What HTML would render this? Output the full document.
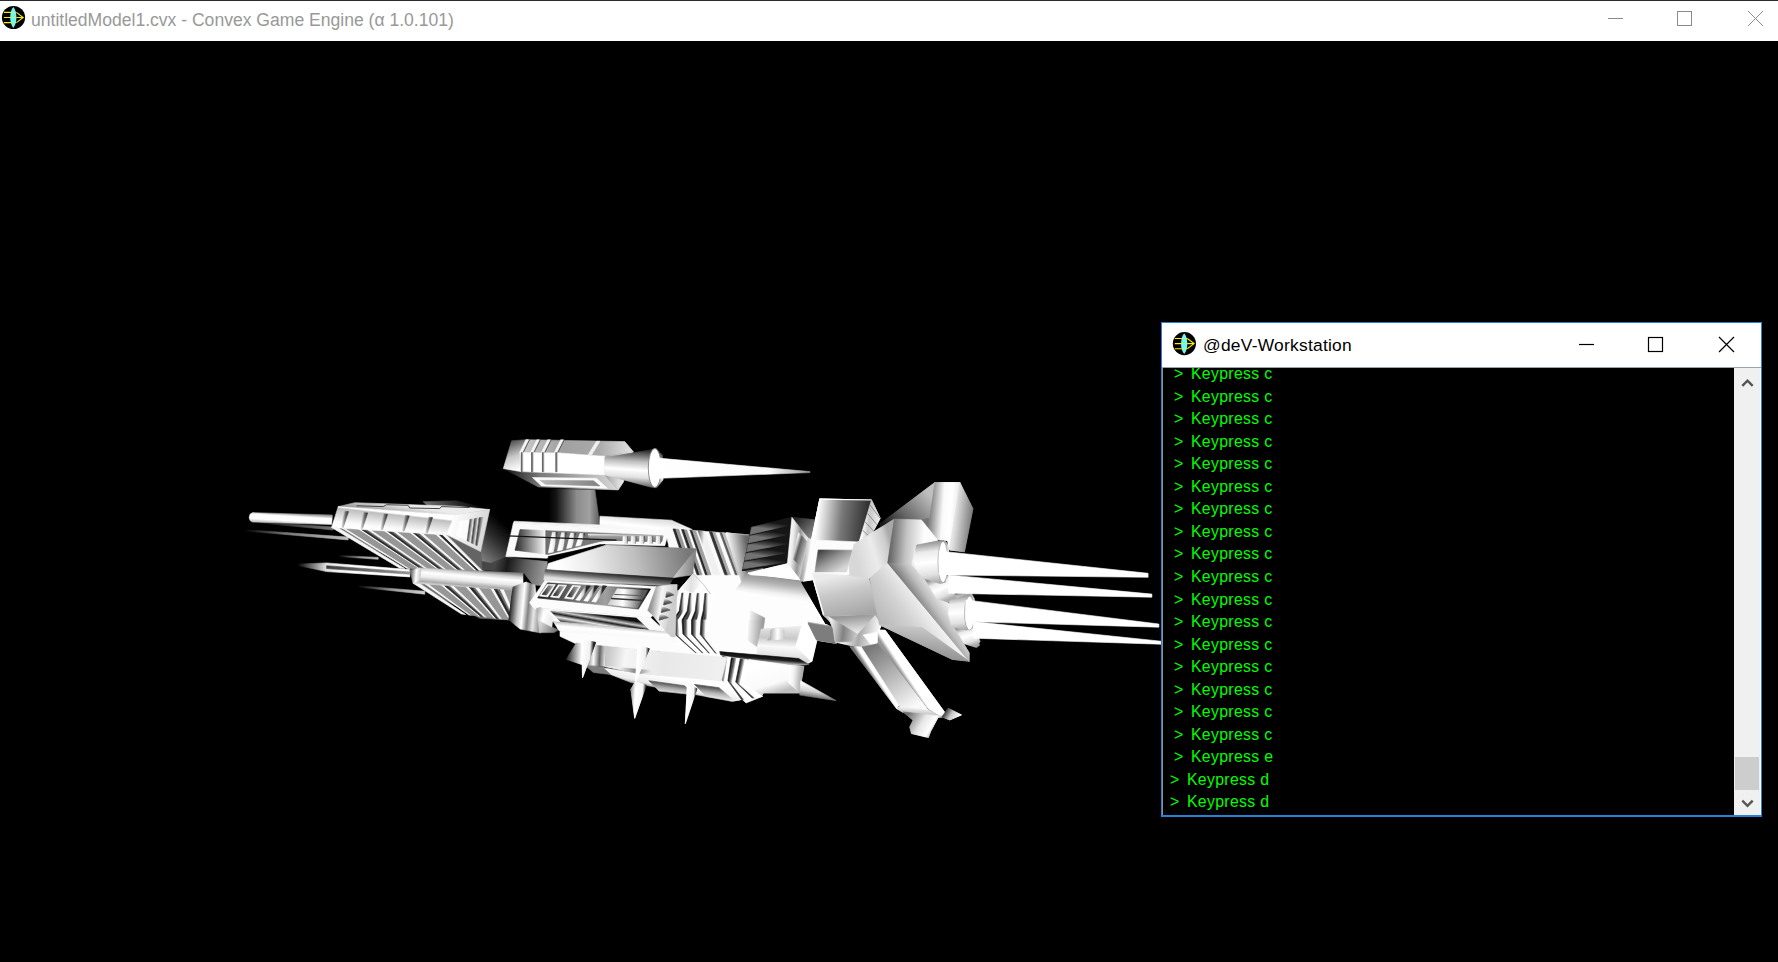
<!DOCTYPE html>
<html><head><meta charset="utf-8"><title>untitledModel1.cvx - Convex Game Engine</title>
<style>
html,body{margin:0;padding:0;background:#000;overflow:hidden}
body{width:1778px;height:962px;position:relative;font-family:"Liberation Sans",sans-serif}
#tb{position:absolute;left:0;top:0;width:1778px;height:41px;background:#fff;border-top:1px solid #2b2b2b;box-sizing:border-box}
#tb .t{position:absolute;left:31px;top:7.7px;font-size:17.6px;line-height:22px;color:#999;white-space:nowrap;letter-spacing:-0.02px}
svg{position:absolute;left:0;top:0}
#cw{position:absolute;left:1161px;top:322px;width:601px;height:495px;box-sizing:border-box;border:1px solid #2a7fd6;border-right-width:1px;border-bottom-width:2px;background:#000}
#ct{position:absolute;left:0;top:0;width:100%;height:45px;background:#fff;border-bottom:1px solid #9aa3ad;box-sizing:border-box}
#ct .t{position:absolute;left:41px;top:11px;font-size:17.4px;line-height:22px;color:#000;white-space:nowrap;letter-spacing:0.25px}
#cb{position:absolute;left:0;top:45px;right:27px;bottom:0;overflow:hidden;color:#00ff00;font-size:15.8px;white-space:pre;border-left:1px solid #8a9099}
#cb div{position:absolute;left:12px;height:22px;line-height:22px}
#sb{position:absolute;right:0;top:45px;width:26px;bottom:0;background:#f0f0f0;border-right:1px solid #fff}
#th{position:absolute;left:1px;width:24px;top:389px;height:33px;background:#cdcdcd}
</style></head><body>
<div id="tb"><span class="t">untitledModel1.cvx - Convex Game Engine (α 1.0.101)</span></div>
<svg width="1778" height="962" viewBox="0 0 1778 962"><defs><linearGradient id="g1" gradientUnits="userSpaceOnUse" x1="244.2" y1="530.0" x2="348.2" y2="538.3"><stop offset="0" stop-color="#000000"/><stop offset="0.4" stop-color="#787878"/><stop offset="1" stop-color="#bebebe"/></linearGradient><linearGradient id="g2" gradientUnits="userSpaceOnUse" x1="338.2" y1="555.8" x2="378.2" y2="558.3"><stop offset="0" stop-color="#000000"/><stop offset="0.5" stop-color="#8c8c8c"/><stop offset="1" stop-color="#c8c8c8"/></linearGradient><linearGradient id="g3" gradientUnits="userSpaceOnUse" x1="297.4" y1="564.1" x2="356.5" y2="568.2"><stop offset="0" stop-color="#000000"/><stop offset="0.5" stop-color="#e6e6e6"/><stop offset="1" stop-color="#ffffff"/></linearGradient><linearGradient id="g4" gradientUnits="userSpaceOnUse" x1="326.6" y1="565.7" x2="409.8" y2="573.2"><stop offset="0" stop-color="#3c3c3c"/><stop offset="1" stop-color="#969696"/></linearGradient><linearGradient id="g5" gradientUnits="userSpaceOnUse" x1="357.4" y1="586.2" x2="424.8" y2="592.4"><stop offset="0" stop-color="#000000"/><stop offset="0.5" stop-color="#969696"/><stop offset="1" stop-color="#d2d2d2"/></linearGradient><linearGradient id="g6" gradientUnits="userSpaceOnUse" x1="260.0" y1="522.5" x2="333.2" y2="528.3"><stop offset="0" stop-color="#141414"/><stop offset="1" stop-color="#787878"/></linearGradient><linearGradient id="g7" gradientUnits="userSpaceOnUse" x1="289.9" y1="513.3" x2="289.3" y2="523.3"><stop offset="0" stop-color="#969696"/><stop offset="0.3" stop-color="#ffffff"/><stop offset="0.75" stop-color="#ffffff"/><stop offset="1" stop-color="#c8c8c8"/></linearGradient><linearGradient id="g8" gradientUnits="userSpaceOnUse" x1="508.0" y1="527.0" x2="478.0" y2="560.0"><stop offset="0" stop-color="#000000"/><stop offset="0.4" stop-color="#2d2d2d"/><stop offset="1" stop-color="#878787"/></linearGradient><linearGradient id="g9" gradientUnits="userSpaceOnUse" x1="494.9" y1="564.9" x2="543.2" y2="574.9"><stop offset="0" stop-color="#464646"/><stop offset="0.25" stop-color="#191919"/><stop offset="0.6" stop-color="#5a5a5a"/><stop offset="1" stop-color="#969696"/></linearGradient><linearGradient id="g10" gradientUnits="userSpaceOnUse" x1="389.8" y1="503.3" x2="388.2" y2="513.3"><stop offset="0" stop-color="#ebebeb"/><stop offset="1" stop-color="#969696"/></linearGradient><linearGradient id="g11" gradientUnits="userSpaceOnUse" x1="389.8" y1="510.0" x2="387.3" y2="531.6"><stop offset="0" stop-color="#ffffff"/><stop offset="0.12" stop-color="#ffffff"/><stop offset="0.2" stop-color="#bebebe"/><stop offset="0.8" stop-color="#fafafa"/><stop offset="1" stop-color="#ffffff"/></linearGradient><linearGradient id="g12" gradientUnits="userSpaceOnUse" x1="341.6" y1="518.3" x2="347.4" y2="518.6"><stop offset="0" stop-color="#ffffff"/><stop offset="0.6" stop-color="#787878"/><stop offset="1" stop-color="#3c3c3c"/></linearGradient><linearGradient id="g13" gradientUnits="userSpaceOnUse" x1="360.7" y1="518.3" x2="366.5" y2="518.6"><stop offset="0" stop-color="#ffffff"/><stop offset="0.6" stop-color="#787878"/><stop offset="1" stop-color="#3c3c3c"/></linearGradient><linearGradient id="g14" gradientUnits="userSpaceOnUse" x1="380.7" y1="518.3" x2="386.5" y2="518.6"><stop offset="0" stop-color="#ffffff"/><stop offset="0.6" stop-color="#787878"/><stop offset="1" stop-color="#3c3c3c"/></linearGradient><linearGradient id="g15" gradientUnits="userSpaceOnUse" x1="402.3" y1="518.3" x2="408.1" y2="518.6"><stop offset="0" stop-color="#ffffff"/><stop offset="0.6" stop-color="#787878"/><stop offset="1" stop-color="#3c3c3c"/></linearGradient><linearGradient id="g16" gradientUnits="userSpaceOnUse" x1="425.6" y1="518.3" x2="431.5" y2="518.6"><stop offset="0" stop-color="#ffffff"/><stop offset="0.6" stop-color="#787878"/><stop offset="1" stop-color="#3c3c3c"/></linearGradient><linearGradient id="g17" gradientUnits="userSpaceOnUse" x1="451.4" y1="523.3" x2="486.4" y2="530.0"><stop offset="0" stop-color="#ffffff"/><stop offset="1" stop-color="#d7d7d7"/></linearGradient><linearGradient id="g18" gradientUnits="userSpaceOnUse" x1="456.4" y1="528.3" x2="481.4" y2="531.6"><stop offset="0" stop-color="#ffffff"/><stop offset="0.45" stop-color="#fafafa"/><stop offset="0.5" stop-color="#505050"/><stop offset="0.62" stop-color="#e6e6e6"/><stop offset="0.68" stop-color="#464646"/><stop offset="0.8" stop-color="#dcdcdc"/><stop offset="0.86" stop-color="#464646"/><stop offset="1" stop-color="#c8c8c8"/></linearGradient><linearGradient id="g19" gradientUnits="userSpaceOnUse" x1="511.4" y1="603.2" x2="524.7" y2="603.2"><stop offset="0" stop-color="#000000"/><stop offset="0.5" stop-color="#3c3c3c"/><stop offset="1" stop-color="#aaaaaa"/></linearGradient><linearGradient id="g20" gradientUnits="userSpaceOnUse" x1="469.7" y1="569.9" x2="468.1" y2="588.2"><stop offset="0" stop-color="#8c8c8c"/><stop offset="0.15" stop-color="#d2d2d2"/><stop offset="0.35" stop-color="#ffffff"/><stop offset="0.6" stop-color="#ebebeb"/><stop offset="0.85" stop-color="#aaaaaa"/><stop offset="1" stop-color="#e6e6e6"/></linearGradient><linearGradient id="g21" gradientUnits="userSpaceOnUse" x1="411.5" y1="574.9" x2="420.6" y2="575.7"><stop offset="0" stop-color="#787878"/><stop offset="0.5" stop-color="#ffffff"/><stop offset="1" stop-color="#c8c8c8"/></linearGradient><linearGradient id="g22" gradientUnits="userSpaceOnUse" x1="548.3" y1="506.6" x2="599.9" y2="506.6"><stop offset="0" stop-color="#000000"/><stop offset="0.15" stop-color="#141414"/><stop offset="0.55" stop-color="#8c8c8c"/><stop offset="0.8" stop-color="#a0a0a0"/><stop offset="1" stop-color="#5a5a5a"/></linearGradient><linearGradient id="g23" gradientUnits="userSpaceOnUse" x1="623.2" y1="516.6" x2="621.5" y2="531.5"><stop offset="0" stop-color="#e1e1e1"/><stop offset="0.5" stop-color="#ffffff"/><stop offset="1" stop-color="#f0f0f0"/></linearGradient><linearGradient id="g24" gradientUnits="userSpaceOnUse" x1="698.0" y1="530.8" x2="704.5" y2="531.3"><stop offset="0" stop-color="#5a5a5a"/><stop offset="1" stop-color="#f0f0f0"/></linearGradient><linearGradient id="g25" gradientUnits="userSpaceOnUse" x1="727.1" y1="533.1" x2="749.7" y2="534.9"><stop offset="0" stop-color="#fcfcfc"/><stop offset="0.3" stop-color="#d7d7d7"/><stop offset="1" stop-color="#6e6e6e"/></linearGradient><linearGradient id="g26" gradientUnits="userSpaceOnUse" x1="515.0" y1="541.5" x2="663.1" y2="541.5"><stop offset="0" stop-color="#282828"/><stop offset="0.2" stop-color="#f5f5f5"/><stop offset="0.21" stop-color="#6e6e6e"/><stop offset="0.5" stop-color="#787878"/><stop offset="1" stop-color="#969696"/></linearGradient><linearGradient id="g27" gradientUnits="userSpaceOnUse" x1="550.8" y1="541.5" x2="556.6" y2="541.5"><stop offset="0" stop-color="#ffffff"/><stop offset="0.7" stop-color="#e6e6e6"/><stop offset="1" stop-color="#3c3c3c"/></linearGradient><linearGradient id="g28" gradientUnits="userSpaceOnUse" x1="559.9" y1="541.5" x2="565.7" y2="541.5"><stop offset="0" stop-color="#ffffff"/><stop offset="0.7" stop-color="#e6e6e6"/><stop offset="1" stop-color="#3c3c3c"/></linearGradient><linearGradient id="g29" gradientUnits="userSpaceOnUse" x1="569.1" y1="541.5" x2="574.9" y2="541.5"><stop offset="0" stop-color="#ffffff"/><stop offset="0.7" stop-color="#e6e6e6"/><stop offset="1" stop-color="#3c3c3c"/></linearGradient><linearGradient id="g30" gradientUnits="userSpaceOnUse" x1="578.2" y1="541.5" x2="584.1" y2="541.5"><stop offset="0" stop-color="#ffffff"/><stop offset="0.7" stop-color="#e6e6e6"/><stop offset="1" stop-color="#3c3c3c"/></linearGradient><linearGradient id="g31" gradientUnits="userSpaceOnUse" x1="623.2" y1="534.0" x2="623.2" y2="541.5"><stop offset="0" stop-color="#fafafa"/><stop offset="0.3" stop-color="#a0a0a0"/><stop offset="1" stop-color="#6e6e6e"/></linearGradient><linearGradient id="g32" gradientUnits="userSpaceOnUse" x1="623.2" y1="539.9" x2="627.8" y2="539.9"><stop offset="0" stop-color="#ffffff"/><stop offset="0.7" stop-color="#d2d2d2"/><stop offset="1" stop-color="#464646"/></linearGradient><linearGradient id="g33" gradientUnits="userSpaceOnUse" x1="631.5" y1="539.9" x2="636.2" y2="539.9"><stop offset="0" stop-color="#ffffff"/><stop offset="0.7" stop-color="#d2d2d2"/><stop offset="1" stop-color="#464646"/></linearGradient><linearGradient id="g34" gradientUnits="userSpaceOnUse" x1="639.8" y1="539.9" x2="644.5" y2="539.9"><stop offset="0" stop-color="#ffffff"/><stop offset="0.7" stop-color="#d2d2d2"/><stop offset="1" stop-color="#464646"/></linearGradient><linearGradient id="g35" gradientUnits="userSpaceOnUse" x1="648.2" y1="539.9" x2="652.8" y2="539.9"><stop offset="0" stop-color="#ffffff"/><stop offset="0.7" stop-color="#d2d2d2"/><stop offset="1" stop-color="#464646"/></linearGradient><linearGradient id="g36" gradientUnits="userSpaceOnUse" x1="656.5" y1="539.9" x2="661.1" y2="539.9"><stop offset="0" stop-color="#ffffff"/><stop offset="0.7" stop-color="#d2d2d2"/><stop offset="1" stop-color="#464646"/></linearGradient><linearGradient id="g37" gradientUnits="userSpaceOnUse" x1="559.9" y1="574.8" x2="686.4" y2="548.2"><stop offset="0" stop-color="#ffffff"/><stop offset="0.25" stop-color="#ebebeb"/><stop offset="0.6" stop-color="#bebebe"/><stop offset="1" stop-color="#787878"/></linearGradient><linearGradient id="g38" gradientUnits="userSpaceOnUse" x1="676.5" y1="566.5" x2="696.4" y2="568.2"><stop offset="0" stop-color="#c8c8c8"/><stop offset="1" stop-color="#787878"/></linearGradient><linearGradient id="g39" gradientUnits="userSpaceOnUse" x1="506.6" y1="478.3" x2="616.5" y2="481.6"><stop offset="0" stop-color="#191919"/><stop offset="0.3" stop-color="#787878"/><stop offset="1" stop-color="#d7d7d7"/></linearGradient><linearGradient id="g40" gradientUnits="userSpaceOnUse" x1="539.9" y1="482.4" x2="599.9" y2="483.3"><stop offset="0" stop-color="#b9b9b9"/><stop offset="1" stop-color="#828282"/></linearGradient><linearGradient id="g41" gradientUnits="userSpaceOnUse" x1="604.9" y1="466.6" x2="628.2" y2="468.3"><stop offset="0" stop-color="#a0a0a0"/><stop offset="1" stop-color="#fafafa"/></linearGradient><linearGradient id="g42" gradientUnits="userSpaceOnUse" x1="508.3" y1="443.3" x2="518.3" y2="469.9"><stop offset="0" stop-color="#5a5a5a"/><stop offset="0.5" stop-color="#c8c8c8"/><stop offset="1" stop-color="#ffffff"/></linearGradient><linearGradient id="g43" gradientUnits="userSpaceOnUse" x1="523.3" y1="446.6" x2="631.5" y2="448.3"><stop offset="0" stop-color="#c8c8c8"/><stop offset="0.35" stop-color="#a0a0a0"/><stop offset="0.7" stop-color="#aaaaaa"/><stop offset="1" stop-color="#e1e1e1"/></linearGradient><linearGradient id="g44" gradientUnits="userSpaceOnUse" x1="521.3" y1="458.3" x2="522.8" y2="458.3"><stop offset="0" stop-color="#3c3c3c"/><stop offset="1" stop-color="#aaaaaa"/></linearGradient><linearGradient id="g45" gradientUnits="userSpaceOnUse" x1="531.6" y1="458.3" x2="533.1" y2="458.3"><stop offset="0" stop-color="#3c3c3c"/><stop offset="1" stop-color="#aaaaaa"/></linearGradient><linearGradient id="g46" gradientUnits="userSpaceOnUse" x1="542.4" y1="458.3" x2="543.9" y2="458.3"><stop offset="0" stop-color="#3c3c3c"/><stop offset="1" stop-color="#aaaaaa"/></linearGradient><linearGradient id="g47" gradientUnits="userSpaceOnUse" x1="555.8" y1="458.3" x2="557.3" y2="458.3"><stop offset="0" stop-color="#3c3c3c"/><stop offset="1" stop-color="#aaaaaa"/></linearGradient><linearGradient id="g48" gradientUnits="userSpaceOnUse" x1="631.5" y1="450.0" x2="629.0" y2="487.4"><stop offset="0" stop-color="#323232"/><stop offset="0.3" stop-color="#bebebe"/><stop offset="0.52" stop-color="#ffffff"/><stop offset="0.72" stop-color="#e1e1e1"/><stop offset="1" stop-color="#505050"/></linearGradient><linearGradient id="g49" gradientUnits="userSpaceOnUse" x1="652.3" y1="466.6" x2="810.0" y2="472.1"><stop offset="0" stop-color="#ffffff"/><stop offset="0.75" stop-color="#fafafa"/><stop offset="1" stop-color="#969696"/></linearGradient><linearGradient id="g50" gradientUnits="userSpaceOnUse" x1="729.9" y1="555.2" x2="748.1" y2="552.1"><stop offset="0" stop-color="#fafafa"/><stop offset="0.4" stop-color="#bebebe"/><stop offset="1" stop-color="#646464"/></linearGradient><linearGradient id="g51" gradientUnits="userSpaceOnUse" x1="774.7" y1="576.9" x2="772.0" y2="597.9"><stop offset="0" stop-color="#969696"/><stop offset="0.3" stop-color="#afafaf"/><stop offset="0.75" stop-color="#f0f0f0"/><stop offset="1" stop-color="#ffffff"/></linearGradient><linearGradient id="g52" gradientUnits="userSpaceOnUse" x1="679.2" y1="610.9" x2="681.0" y2="610.9"><stop offset="0" stop-color="#141414"/><stop offset="1" stop-color="#3c3c3c"/></linearGradient><linearGradient id="g53" gradientUnits="userSpaceOnUse" x1="681.0" y1="610.9" x2="684.0" y2="610.9"><stop offset="0" stop-color="#464646"/><stop offset="1" stop-color="#fafafa"/></linearGradient><linearGradient id="g54" gradientUnits="userSpaceOnUse" x1="684.0" y1="610.9" x2="687.2" y2="610.9"><stop offset="0" stop-color="#ffffff"/><stop offset="1" stop-color="#ffffff"/></linearGradient><linearGradient id="g55" gradientUnits="userSpaceOnUse" x1="687.2" y1="610.9" x2="689.0" y2="610.9"><stop offset="0" stop-color="#141414"/><stop offset="1" stop-color="#3c3c3c"/></linearGradient><linearGradient id="g56" gradientUnits="userSpaceOnUse" x1="689.0" y1="610.9" x2="692.0" y2="610.9"><stop offset="0" stop-color="#464646"/><stop offset="1" stop-color="#fafafa"/></linearGradient><linearGradient id="g57" gradientUnits="userSpaceOnUse" x1="692.0" y1="610.9" x2="695.2" y2="610.9"><stop offset="0" stop-color="#ffffff"/><stop offset="1" stop-color="#ffffff"/></linearGradient><linearGradient id="g58" gradientUnits="userSpaceOnUse" x1="695.2" y1="610.9" x2="696.9" y2="610.9"><stop offset="0" stop-color="#141414"/><stop offset="1" stop-color="#3c3c3c"/></linearGradient><linearGradient id="g59" gradientUnits="userSpaceOnUse" x1="696.9" y1="610.9" x2="700.0" y2="610.9"><stop offset="0" stop-color="#464646"/><stop offset="1" stop-color="#fafafa"/></linearGradient><linearGradient id="g60" gradientUnits="userSpaceOnUse" x1="700.0" y1="610.9" x2="703.2" y2="610.9"><stop offset="0" stop-color="#ffffff"/><stop offset="1" stop-color="#ffffff"/></linearGradient><linearGradient id="g61" gradientUnits="userSpaceOnUse" x1="703.2" y1="610.9" x2="704.9" y2="610.9"><stop offset="0" stop-color="#141414"/><stop offset="1" stop-color="#3c3c3c"/></linearGradient><linearGradient id="g62" gradientUnits="userSpaceOnUse" x1="704.9" y1="610.9" x2="707.9" y2="610.9"><stop offset="0" stop-color="#464646"/><stop offset="1" stop-color="#fafafa"/></linearGradient><linearGradient id="g63" gradientUnits="userSpaceOnUse" x1="707.9" y1="610.9" x2="711.1" y2="610.9"><stop offset="0" stop-color="#ffffff"/><stop offset="1" stop-color="#ffffff"/></linearGradient><linearGradient id="g64" gradientUnits="userSpaceOnUse" x1="674.2" y1="633.7" x2="676.1" y2="633.8"><stop offset="0" stop-color="#141414"/><stop offset="1" stop-color="#3c3c3c"/></linearGradient><linearGradient id="g65" gradientUnits="userSpaceOnUse" x1="676.1" y1="633.8" x2="679.4" y2="633.9"><stop offset="0" stop-color="#464646"/><stop offset="1" stop-color="#fafafa"/></linearGradient><linearGradient id="g66" gradientUnits="userSpaceOnUse" x1="679.4" y1="633.9" x2="682.9" y2="634.0"><stop offset="0" stop-color="#ffffff"/><stop offset="1" stop-color="#ffffff"/></linearGradient><linearGradient id="g67" gradientUnits="userSpaceOnUse" x1="682.9" y1="634.0" x2="684.8" y2="634.0"><stop offset="0" stop-color="#141414"/><stop offset="1" stop-color="#3c3c3c"/></linearGradient><linearGradient id="g68" gradientUnits="userSpaceOnUse" x1="684.8" y1="634.0" x2="688.1" y2="634.1"><stop offset="0" stop-color="#464646"/><stop offset="1" stop-color="#fafafa"/></linearGradient><linearGradient id="g69" gradientUnits="userSpaceOnUse" x1="688.1" y1="634.1" x2="691.5" y2="634.2"><stop offset="0" stop-color="#ffffff"/><stop offset="1" stop-color="#ffffff"/></linearGradient><linearGradient id="g70" gradientUnits="userSpaceOnUse" x1="691.5" y1="634.2" x2="693.4" y2="634.2"><stop offset="0" stop-color="#141414"/><stop offset="1" stop-color="#3c3c3c"/></linearGradient><linearGradient id="g71" gradientUnits="userSpaceOnUse" x1="693.4" y1="634.2" x2="696.7" y2="634.3"><stop offset="0" stop-color="#464646"/><stop offset="1" stop-color="#fafafa"/></linearGradient><linearGradient id="g72" gradientUnits="userSpaceOnUse" x1="696.7" y1="634.3" x2="700.2" y2="634.4"><stop offset="0" stop-color="#ffffff"/><stop offset="1" stop-color="#ffffff"/></linearGradient><linearGradient id="g73" gradientUnits="userSpaceOnUse" x1="700.2" y1="634.4" x2="702.1" y2="634.4"><stop offset="0" stop-color="#141414"/><stop offset="1" stop-color="#3c3c3c"/></linearGradient><linearGradient id="g74" gradientUnits="userSpaceOnUse" x1="702.1" y1="634.4" x2="705.4" y2="634.5"><stop offset="0" stop-color="#464646"/><stop offset="1" stop-color="#fafafa"/></linearGradient><linearGradient id="g75" gradientUnits="userSpaceOnUse" x1="705.4" y1="634.5" x2="708.8" y2="634.6"><stop offset="0" stop-color="#ffffff"/><stop offset="1" stop-color="#ffffff"/></linearGradient><linearGradient id="g76" gradientUnits="userSpaceOnUse" x1="680.2" y1="580.5" x2="702.5" y2="582.5"><stop offset="0" stop-color="#ffffff"/><stop offset="0.5" stop-color="#e1e1e1"/><stop offset="1" stop-color="#ffffff"/></linearGradient><linearGradient id="g77" gradientUnits="userSpaceOnUse" x1="748.1" y1="626.1" x2="764.3" y2="627.1"><stop offset="0" stop-color="#ffffff"/><stop offset="0.15" stop-color="#ebebeb"/><stop offset="1" stop-color="#969696"/></linearGradient><linearGradient id="g78" gradientUnits="userSpaceOnUse" x1="747.1" y1="630.1" x2="763.3" y2="631.1"><stop offset="0" stop-color="#ffffff"/><stop offset="0.15" stop-color="#ebebeb"/><stop offset="1" stop-color="#969696"/></linearGradient><linearGradient id="g79" gradientUnits="userSpaceOnUse" x1="781.5" y1="626.1" x2="779.5" y2="660.5"><stop offset="0" stop-color="#ebebeb"/><stop offset="0.35" stop-color="#c8c8c8"/><stop offset="0.6" stop-color="#fafafa"/><stop offset="1" stop-color="#d7d7d7"/></linearGradient><linearGradient id="g80" gradientUnits="userSpaceOnUse" x1="770.3" y1="634.2" x2="784.5" y2="634.7"><stop offset="0" stop-color="#b4b4b4"/><stop offset="0.5" stop-color="#ffffff"/><stop offset="1" stop-color="#c8c8c8"/></linearGradient><linearGradient id="g81" gradientUnits="userSpaceOnUse" x1="808.8" y1="624.0" x2="836.2" y2="640.2"><stop offset="0" stop-color="#aaaaaa"/><stop offset="1" stop-color="#6e6e6e"/></linearGradient><linearGradient id="g82" gradientUnits="userSpaceOnUse" x1="759.2" y1="652.2" x2="758.2" y2="664.5"><stop offset="0" stop-color="#c8c8c8"/><stop offset="0.2" stop-color="#0a0a0a"/><stop offset="0.5" stop-color="#1e1e1e"/><stop offset="0.75" stop-color="#aaaaaa"/><stop offset="1" stop-color="#ebebeb"/></linearGradient><linearGradient id="g83" gradientUnits="userSpaceOnUse" x1="761.2" y1="662.5" x2="771.4" y2="694.9"><stop offset="0" stop-color="#ffffff"/><stop offset="0.7" stop-color="#fafafa"/><stop offset="1" stop-color="#bebebe"/></linearGradient><linearGradient id="g84" gradientUnits="userSpaceOnUse" x1="789.6" y1="675.7" x2="803.8" y2="676.7"><stop offset="0" stop-color="#ffffff"/><stop offset="0.3" stop-color="#f0f0f0"/><stop offset="1" stop-color="#969696"/></linearGradient><linearGradient id="g85" gradientUnits="userSpaceOnUse" x1="801.7" y1="682.8" x2="799.7" y2="696.9"><stop offset="0" stop-color="#ffffff"/><stop offset="0.5" stop-color="#d2d2d2"/><stop offset="1" stop-color="#5a5a5a"/></linearGradient><linearGradient id="g86" gradientUnits="userSpaceOnUse" x1="720.1" y1="679.3" x2="721.8" y2="679.6"><stop offset="0" stop-color="#141414"/><stop offset="1" stop-color="#3c3c3c"/></linearGradient><linearGradient id="g87" gradientUnits="userSpaceOnUse" x1="721.8" y1="679.6" x2="724.8" y2="680.1"><stop offset="0" stop-color="#464646"/><stop offset="1" stop-color="#fafafa"/></linearGradient><linearGradient id="g88" gradientUnits="userSpaceOnUse" x1="724.8" y1="680.1" x2="727.9" y2="680.7"><stop offset="0" stop-color="#ffffff"/><stop offset="1" stop-color="#ffffff"/></linearGradient><linearGradient id="g89" gradientUnits="userSpaceOnUse" x1="727.9" y1="680.7" x2="729.6" y2="681.0"><stop offset="0" stop-color="#141414"/><stop offset="1" stop-color="#3c3c3c"/></linearGradient><linearGradient id="g90" gradientUnits="userSpaceOnUse" x1="729.6" y1="681.0" x2="732.6" y2="681.6"><stop offset="0" stop-color="#464646"/><stop offset="1" stop-color="#fafafa"/></linearGradient><linearGradient id="g91" gradientUnits="userSpaceOnUse" x1="732.6" y1="681.6" x2="735.7" y2="682.1"><stop offset="0" stop-color="#ffffff"/><stop offset="1" stop-color="#ffffff"/></linearGradient><linearGradient id="g92" gradientUnits="userSpaceOnUse" x1="735.7" y1="682.1" x2="737.4" y2="682.4"><stop offset="0" stop-color="#141414"/><stop offset="1" stop-color="#3c3c3c"/></linearGradient><linearGradient id="g93" gradientUnits="userSpaceOnUse" x1="737.4" y1="682.4" x2="740.3" y2="683.0"><stop offset="0" stop-color="#464646"/><stop offset="1" stop-color="#fafafa"/></linearGradient><linearGradient id="g94" gradientUnits="userSpaceOnUse" x1="740.3" y1="683.0" x2="743.4" y2="683.5"><stop offset="0" stop-color="#ffffff"/><stop offset="1" stop-color="#ffffff"/></linearGradient><linearGradient id="g95" gradientUnits="userSpaceOnUse" x1="509.0" y1="600.0" x2="541.0" y2="603.0"><stop offset="0" stop-color="#000000"/><stop offset="0.3" stop-color="#c8c8c8"/><stop offset="0.45" stop-color="#ffffff"/><stop offset="0.62" stop-color="#828282"/><stop offset="0.8" stop-color="#e6e6e6"/><stop offset="1" stop-color="#969696"/></linearGradient><linearGradient id="g96" gradientUnits="userSpaceOnUse" x1="608.1" y1="573.1" x2="607.1" y2="583.2"><stop offset="0" stop-color="#232323"/><stop offset="0.5" stop-color="#737373"/><stop offset="1" stop-color="#e1e1e1"/></linearGradient><linearGradient id="g97" gradientUnits="userSpaceOnUse" x1="651.6" y1="600.4" x2="673.9" y2="603.5"><stop offset="0" stop-color="#969696"/><stop offset="0.4" stop-color="#f5f5f5"/><stop offset="1" stop-color="#c8c8c8"/></linearGradient><linearGradient id="g98" gradientUnits="userSpaceOnUse" x1="665.8" y1="590.3" x2="666.8" y2="597.4"><stop offset="0" stop-color="#ffffff"/><stop offset="0.5" stop-color="#787878"/><stop offset="1" stop-color="#282828"/></linearGradient><linearGradient id="g99" gradientUnits="userSpaceOnUse" x1="665.8" y1="597.9" x2="666.8" y2="605.0"><stop offset="0" stop-color="#ffffff"/><stop offset="0.5" stop-color="#787878"/><stop offset="1" stop-color="#282828"/></linearGradient><linearGradient id="g100" gradientUnits="userSpaceOnUse" x1="665.8" y1="605.5" x2="666.8" y2="612.6"><stop offset="0" stop-color="#ffffff"/><stop offset="0.5" stop-color="#787878"/><stop offset="1" stop-color="#282828"/></linearGradient><linearGradient id="g101" gradientUnits="userSpaceOnUse" x1="665.8" y1="613.1" x2="666.8" y2="620.2"><stop offset="0" stop-color="#ffffff"/><stop offset="0.5" stop-color="#787878"/><stop offset="1" stop-color="#282828"/></linearGradient><linearGradient id="g102" gradientUnits="userSpaceOnUse" x1="537.7" y1="595.4" x2="650.6" y2="598.4"><stop offset="0" stop-color="#191919"/><stop offset="0.3" stop-color="#696969"/><stop offset="0.6" stop-color="#a0a0a0"/><stop offset="0.85" stop-color="#555555"/><stop offset="1" stop-color="#050505"/></linearGradient><linearGradient id="g103" gradientUnits="userSpaceOnUse" x1="542.3" y1="590.3" x2="552.4" y2="590.8"><stop offset="0" stop-color="#1e1e1e"/><stop offset="1" stop-color="#aaaaaa"/></linearGradient><linearGradient id="g104" gradientUnits="userSpaceOnUse" x1="553.4" y1="590.3" x2="563.5" y2="590.8"><stop offset="0" stop-color="#1e1e1e"/><stop offset="1" stop-color="#aaaaaa"/></linearGradient><linearGradient id="g105" gradientUnits="userSpaceOnUse" x1="567.6" y1="590.3" x2="577.7" y2="590.8"><stop offset="0" stop-color="#1e1e1e"/><stop offset="1" stop-color="#aaaaaa"/></linearGradient><linearGradient id="g106" gradientUnits="userSpaceOnUse" x1="580.7" y1="593.3" x2="585.8" y2="593.9"><stop offset="0" stop-color="#ffffff"/><stop offset="0.6" stop-color="#c8c8c8"/><stop offset="1" stop-color="#282828"/></linearGradient><linearGradient id="g107" gradientUnits="userSpaceOnUse" x1="588.8" y1="593.3" x2="593.9" y2="593.9"><stop offset="0" stop-color="#ffffff"/><stop offset="0.6" stop-color="#c8c8c8"/><stop offset="1" stop-color="#282828"/></linearGradient><linearGradient id="g108" gradientUnits="userSpaceOnUse" x1="596.9" y1="593.3" x2="602.0" y2="593.9"><stop offset="0" stop-color="#ffffff"/><stop offset="0.6" stop-color="#c8c8c8"/><stop offset="1" stop-color="#282828"/></linearGradient><linearGradient id="g109" gradientUnits="userSpaceOnUse" x1="611.1" y1="595.4" x2="641.5" y2="598.4"><stop offset="0" stop-color="#d2d2d2"/><stop offset="0.4" stop-color="#ffffff"/><stop offset="0.7" stop-color="#b4b4b4"/><stop offset="1" stop-color="#5a5a5a"/></linearGradient><linearGradient id="g110" gradientUnits="userSpaceOnUse" x1="590.9" y1="613.6" x2="588.8" y2="625.7"><stop offset="0" stop-color="#0f0f0f"/><stop offset="0.3" stop-color="#c8c8c8"/><stop offset="0.5" stop-color="#232323"/><stop offset="0.75" stop-color="#e6e6e6"/><stop offset="1" stop-color="#5a5a5a"/></linearGradient><linearGradient id="g111" gradientUnits="userSpaceOnUse" x1="540.2" y1="625.7" x2="556.4" y2="631.8"><stop offset="0" stop-color="#d2d2d2"/><stop offset="1" stop-color="#6e6e6e"/></linearGradient><linearGradient id="g112" gradientUnits="userSpaceOnUse" x1="537.2" y1="613.6" x2="552.4" y2="617.6"><stop offset="0" stop-color="#b4b4b4"/><stop offset="0.4" stop-color="#ffffff"/><stop offset="1" stop-color="#ebebeb"/></linearGradient><linearGradient id="g113" gradientUnits="userSpaceOnUse" x1="601.0" y1="625.7" x2="600.0" y2="637.9"><stop offset="0" stop-color="#c8c8c8"/><stop offset="0.3" stop-color="#ffffff"/><stop offset="1" stop-color="#f5f5f5"/></linearGradient><linearGradient id="g114" gradientUnits="userSpaceOnUse" x1="661.2" y1="675.6" x2="657.2" y2="694.8"><stop offset="0" stop-color="#ffffff"/><stop offset="0.5" stop-color="#ebebeb"/><stop offset="0.75" stop-color="#828282"/><stop offset="1" stop-color="#fafafa"/></linearGradient><linearGradient id="g115" gradientUnits="userSpaceOnUse" x1="566.1" y1="654.3" x2="605.6" y2="656.3"><stop offset="0" stop-color="#1e1e1e"/><stop offset="0.25" stop-color="#aaaaaa"/><stop offset="0.4" stop-color="#ffffff"/><stop offset="0.55" stop-color="#8c8c8c"/><stop offset="0.7" stop-color="#fafafa"/><stop offset="0.85" stop-color="#646464"/><stop offset="1" stop-color="#f0f0f0"/></linearGradient><linearGradient id="g116" gradientUnits="userSpaceOnUse" x1="608.6" y1="650.2" x2="722.0" y2="668.5"><stop offset="0" stop-color="#c8c8c8"/><stop offset="0.15" stop-color="#f5f5f5"/><stop offset="0.5" stop-color="#e8e8e8"/><stop offset="1" stop-color="#f0f0f0"/></linearGradient><linearGradient id="g117" gradientUnits="userSpaceOnUse" x1="620.7" y1="667.5" x2="651.1" y2="672.5"><stop offset="0" stop-color="#ebebeb"/><stop offset="0.5" stop-color="#828282"/><stop offset="1" stop-color="#ebebeb"/></linearGradient><linearGradient id="g118" gradientUnits="userSpaceOnUse" x1="667.5" y1="681.0" x2="665.8" y2="694.5"><stop offset="0" stop-color="#282828"/><stop offset="0.5" stop-color="#aaaaaa"/><stop offset="1" stop-color="#fafafa"/></linearGradient><linearGradient id="g119" gradientUnits="userSpaceOnUse" x1="709.7" y1="685.2" x2="708.0" y2="699.6"><stop offset="0" stop-color="#323232"/><stop offset="0.5" stop-color="#b4b4b4"/><stop offset="1" stop-color="#fafafa"/></linearGradient><linearGradient id="g120" gradientUnits="userSpaceOnUse" x1="581.8" y1="650.2" x2="593.4" y2="650.8"><stop offset="0" stop-color="#ffffff"/><stop offset="0.7" stop-color="#f0f0f0"/><stop offset="1" stop-color="#1e1e1e"/></linearGradient><linearGradient id="g121" gradientUnits="userSpaceOnUse" x1="638.0" y1="660.4" x2="648.1" y2="660.9"><stop offset="0" stop-color="#ffffff"/><stop offset="0.7" stop-color="#f0f0f0"/><stop offset="1" stop-color="#282828"/></linearGradient><linearGradient id="g122" gradientUnits="userSpaceOnUse" x1="630.9" y1="695.8" x2="645.0" y2="696.8"><stop offset="0" stop-color="#a0a0a0"/><stop offset="0.3" stop-color="#ffffff"/><stop offset="0.8" stop-color="#f5f5f5"/><stop offset="1" stop-color="#3c3c3c"/></linearGradient><linearGradient id="g123" gradientUnits="userSpaceOnUse" x1="687.1" y1="700.9" x2="695.7" y2="701.4"><stop offset="0" stop-color="#ffffff"/><stop offset="0.7" stop-color="#f5f5f5"/><stop offset="1" stop-color="#3c3c3c"/></linearGradient><linearGradient id="g124" gradientUnits="userSpaceOnUse" x1="888.7" y1="529.3" x2="928.0" y2="493.7"><stop offset="0" stop-color="#191919"/><stop offset="0.4" stop-color="#646464"/><stop offset="1" stop-color="#bebebe"/></linearGradient><linearGradient id="g125" gradientUnits="userSpaceOnUse" x1="928.0" y1="518.1" x2="959.8" y2="520.3"><stop offset="0" stop-color="#737373"/><stop offset="0.45" stop-color="#fafafa"/><stop offset="0.7" stop-color="#ffffff"/><stop offset="1" stop-color="#e4e4e4"/></linearGradient><linearGradient id="g126" gradientUnits="userSpaceOnUse" x1="954.2" y1="521.8" x2="971.0" y2="523.7"><stop offset="0" stop-color="#e4e4e4"/><stop offset="1" stop-color="#7d7d7d"/></linearGradient><linearGradient id="g127" gradientUnits="userSpaceOnUse" x1="771.8" y1="522.4" x2="770.7" y2="529.6"><stop offset="0" stop-color="#161616"/><stop offset="0.6" stop-color="#464646"/><stop offset="1" stop-color="#737373"/></linearGradient><linearGradient id="g128" gradientUnits="userSpaceOnUse" x1="770.4" y1="531.4" x2="769.3" y2="538.5"><stop offset="0" stop-color="#161616"/><stop offset="0.6" stop-color="#464646"/><stop offset="1" stop-color="#737373"/></linearGradient><linearGradient id="g129" gradientUnits="userSpaceOnUse" x1="769.1" y1="540.3" x2="768.0" y2="547.5"><stop offset="0" stop-color="#161616"/><stop offset="0.6" stop-color="#464646"/><stop offset="1" stop-color="#737373"/></linearGradient><linearGradient id="g130" gradientUnits="userSpaceOnUse" x1="767.7" y1="549.3" x2="766.6" y2="556.4"><stop offset="0" stop-color="#161616"/><stop offset="0.6" stop-color="#464646"/><stop offset="1" stop-color="#737373"/></linearGradient><linearGradient id="g131" gradientUnits="userSpaceOnUse" x1="766.3" y1="558.2" x2="765.2" y2="565.4"><stop offset="0" stop-color="#161616"/><stop offset="0.6" stop-color="#464646"/><stop offset="1" stop-color="#737373"/></linearGradient><linearGradient id="g132" gradientUnits="userSpaceOnUse" x1="796.6" y1="519.9" x2="813.2" y2="536.6"><stop offset="0" stop-color="#282828"/><stop offset="1" stop-color="#8c8c8c"/></linearGradient><linearGradient id="g133" gradientUnits="userSpaceOnUse" x1="788.3" y1="541.6" x2="806.6" y2="543.3"><stop offset="0" stop-color="#ffffff"/><stop offset="0.25" stop-color="#ebebeb"/><stop offset="0.6" stop-color="#969696"/><stop offset="1" stop-color="#f0f0f0"/></linearGradient><linearGradient id="g134" gradientUnits="userSpaceOnUse" x1="795.8" y1="544.9" x2="806.9" y2="548.2"><stop offset="0" stop-color="#ebebeb"/><stop offset="0.3" stop-color="#5f5f5f"/><stop offset="1" stop-color="#c3c3c3"/></linearGradient><linearGradient id="g135" gradientUnits="userSpaceOnUse" x1="816.6" y1="518.3" x2="866.5" y2="523.3"><stop offset="0" stop-color="#ffffff"/><stop offset="0.08" stop-color="#ebebeb"/><stop offset="0.5" stop-color="#787878"/><stop offset="1" stop-color="#323232"/></linearGradient><linearGradient id="g136" gradientUnits="userSpaceOnUse" x1="863.2" y1="519.9" x2="878.2" y2="521.6"><stop offset="0" stop-color="#ffffff"/><stop offset="0.4" stop-color="#c8c8c8"/><stop offset="1" stop-color="#ebebeb"/></linearGradient><linearGradient id="g137" gradientUnits="userSpaceOnUse" x1="823.2" y1="549.9" x2="836.5" y2="572.4"><stop offset="0" stop-color="#464646"/><stop offset="0.5" stop-color="#969696"/><stop offset="1" stop-color="#d7d7d7"/></linearGradient><linearGradient id="g138" gradientUnits="userSpaceOnUse" x1="800.8" y1="559.9" x2="809.9" y2="560.7"><stop offset="0" stop-color="#8c8c8c"/><stop offset="1" stop-color="#ffffff"/></linearGradient><linearGradient id="g139" gradientUnits="userSpaceOnUse" x1="839.9" y1="574.9" x2="849.9" y2="618.2"><stop offset="0" stop-color="#ebebeb"/><stop offset="0.4" stop-color="#c8c8c8"/><stop offset="1" stop-color="#a5a5a5"/></linearGradient><linearGradient id="g140" gradientUnits="userSpaceOnUse" x1="829.9" y1="625.0" x2="879.8" y2="633.3"><stop offset="0" stop-color="#c8c8c8"/><stop offset="0.3" stop-color="#f5f5f5"/><stop offset="0.6" stop-color="#aaaaaa"/><stop offset="1" stop-color="#ffffff"/></linearGradient><linearGradient id="g141" gradientUnits="userSpaceOnUse" x1="853.2" y1="615.8" x2="854.9" y2="633.3"><stop offset="0" stop-color="#969696"/><stop offset="1" stop-color="#ebebeb"/></linearGradient><linearGradient id="g142" gradientUnits="userSpaceOnUse" x1="829.9" y1="630.0" x2="856.5" y2="633.3"><stop offset="0" stop-color="#ebebeb"/><stop offset="0.5" stop-color="#828282"/><stop offset="1" stop-color="#c8c8c8"/></linearGradient><linearGradient id="g143" gradientUnits="userSpaceOnUse" x1="873.2" y1="678.2" x2="880.7" y2="673.3"><stop offset="0" stop-color="#787878"/><stop offset="0.4" stop-color="#ffffff"/><stop offset="1" stop-color="#ffffff"/></linearGradient><linearGradient id="g144" gradientUnits="userSpaceOnUse" x1="871.5" y1="646.6" x2="913.1" y2="708.2"><stop offset="0" stop-color="#787878"/><stop offset="0.5" stop-color="#b9b9b9"/><stop offset="1" stop-color="#fafafa"/></linearGradient><linearGradient id="g145" gradientUnits="userSpaceOnUse" x1="904.8" y1="678.2" x2="914.8" y2="671.6"><stop offset="0" stop-color="#969696"/><stop offset="0.3" stop-color="#ffffff"/><stop offset="1" stop-color="#ffffff"/></linearGradient><linearGradient id="g146" gradientUnits="userSpaceOnUse" x1="913.1" y1="706.5" x2="912.3" y2="714.9"><stop offset="0" stop-color="#ffffff"/><stop offset="1" stop-color="#b4b4b4"/></linearGradient><linearGradient id="g147" gradientUnits="userSpaceOnUse" x1="906.5" y1="716.5" x2="934.8" y2="733.2"><stop offset="0" stop-color="#6e6e6e"/><stop offset="0.5" stop-color="#e6e6e6"/><stop offset="0.8" stop-color="#ffffff"/><stop offset="1" stop-color="#969696"/></linearGradient><linearGradient id="g148" gradientUnits="userSpaceOnUse" x1="944.8" y1="709.9" x2="958.1" y2="718.2"><stop offset="0" stop-color="#1e1e1e"/><stop offset="0.5" stop-color="#c8c8c8"/><stop offset="1" stop-color="#ffffff"/></linearGradient><linearGradient id="g149" gradientUnits="userSpaceOnUse" x1="855.0" y1="557.4" x2="892.4" y2="546.1"><stop offset="0" stop-color="#d7d7d7"/><stop offset="0.5" stop-color="#ebebeb"/><stop offset="0.85" stop-color="#cdcdcd"/><stop offset="1" stop-color="#aaaaaa"/></linearGradient><linearGradient id="g150" gradientUnits="userSpaceOnUse" x1="889.0" y1="542.4" x2="923.3" y2="544.6"><stop offset="0" stop-color="#5f5f5f"/><stop offset="0.5" stop-color="#c3c3c3"/><stop offset="1" stop-color="#fcfcfc"/></linearGradient><linearGradient id="g151" gradientUnits="userSpaceOnUse" x1="883.0" y1="624.7" x2="922.3" y2="596.7"><stop offset="0" stop-color="#b9b9b9"/><stop offset="0.5" stop-color="#d2d2d2"/><stop offset="1" stop-color="#f5f5f5"/></linearGradient><linearGradient id="g152" gradientUnits="userSpaceOnUse" x1="905.5" y1="624.7" x2="901.8" y2="650.9"><stop offset="0" stop-color="#c8c8c8"/><stop offset="1" stop-color="#969696"/></linearGradient><linearGradient id="g153" gradientUnits="userSpaceOnUse" x1="920.5" y1="613.5" x2="944.8" y2="596.7"><stop offset="0" stop-color="#696969"/><stop offset="0.5" stop-color="#bebebe"/><stop offset="1" stop-color="#f5f5f5"/></linearGradient><linearGradient id="g154" gradientUnits="userSpaceOnUse" x1="937.3" y1="578.0" x2="944.8" y2="602.3"><stop offset="0" stop-color="#969696"/><stop offset="0.2" stop-color="#ebebeb"/><stop offset="0.5" stop-color="#ffffff"/><stop offset="0.8" stop-color="#e1e1e1"/><stop offset="1" stop-color="#a0a0a0"/></linearGradient><linearGradient id="g155" gradientUnits="userSpaceOnUse" x1="928.0" y1="541.5" x2="933.6" y2="581.7"><stop offset="0" stop-color="#969696"/><stop offset="0.2" stop-color="#ebebeb"/><stop offset="0.5" stop-color="#ffffff"/><stop offset="0.8" stop-color="#e1e1e1"/><stop offset="1" stop-color="#a0a0a0"/></linearGradient><linearGradient id="g156" gradientUnits="userSpaceOnUse" x1="963.5" y1="626.6" x2="971.0" y2="647.2"><stop offset="0" stop-color="#969696"/><stop offset="0.2" stop-color="#ebebeb"/><stop offset="0.5" stop-color="#ffffff"/><stop offset="0.8" stop-color="#e1e1e1"/><stop offset="1" stop-color="#a0a0a0"/></linearGradient><linearGradient id="g157" gradientUnits="userSpaceOnUse" x1="959.8" y1="592.9" x2="963.5" y2="630.4"><stop offset="0" stop-color="#969696"/><stop offset="0.2" stop-color="#ebebeb"/><stop offset="0.5" stop-color="#ffffff"/><stop offset="0.8" stop-color="#e1e1e1"/><stop offset="1" stop-color="#a0a0a0"/></linearGradient><linearGradient id="g158" gradientUnits="userSpaceOnUse" x1="581.8" y1="650.2" x2="593.4" y2="650.8"><stop offset="0" stop-color="#ffffff"/><stop offset="0.7" stop-color="#f0f0f0"/><stop offset="1" stop-color="#1e1e1e"/></linearGradient><linearGradient id="g159" gradientUnits="userSpaceOnUse" x1="638.0" y1="660.4" x2="648.1" y2="660.9"><stop offset="0" stop-color="#ffffff"/><stop offset="0.7" stop-color="#f0f0f0"/><stop offset="1" stop-color="#282828"/></linearGradient><linearGradient id="g160" gradientUnits="userSpaceOnUse" x1="630.9" y1="695.8" x2="645.0" y2="696.8"><stop offset="0" stop-color="#a0a0a0"/><stop offset="0.3" stop-color="#ffffff"/><stop offset="0.8" stop-color="#f5f5f5"/><stop offset="1" stop-color="#3c3c3c"/></linearGradient><linearGradient id="g161" gradientUnits="userSpaceOnUse" x1="687.1" y1="700.9" x2="695.7" y2="701.4"><stop offset="0" stop-color="#ffffff"/><stop offset="0.7" stop-color="#f5f5f5"/><stop offset="1" stop-color="#3c3c3c"/></linearGradient><linearGradient id="g162" gradientUnits="userSpaceOnUse" x1="888.7" y1="529.3" x2="928.0" y2="493.7"><stop offset="0" stop-color="#191919"/><stop offset="0.4" stop-color="#646464"/><stop offset="1" stop-color="#bebebe"/></linearGradient><linearGradient id="g163" gradientUnits="userSpaceOnUse" x1="928.0" y1="518.1" x2="959.8" y2="520.3"><stop offset="0" stop-color="#737373"/><stop offset="0.45" stop-color="#fafafa"/><stop offset="0.7" stop-color="#ffffff"/><stop offset="1" stop-color="#e4e4e4"/></linearGradient><linearGradient id="g164" gradientUnits="userSpaceOnUse" x1="954.2" y1="521.8" x2="971.0" y2="523.7"><stop offset="0" stop-color="#e4e4e4"/><stop offset="1" stop-color="#7d7d7d"/></linearGradient><linearGradient id="g165" gradientUnits="userSpaceOnUse" x1="771.8" y1="522.4" x2="770.7" y2="529.6"><stop offset="0" stop-color="#161616"/><stop offset="0.6" stop-color="#464646"/><stop offset="1" stop-color="#737373"/></linearGradient><linearGradient id="g166" gradientUnits="userSpaceOnUse" x1="770.4" y1="531.4" x2="769.3" y2="538.5"><stop offset="0" stop-color="#161616"/><stop offset="0.6" stop-color="#464646"/><stop offset="1" stop-color="#737373"/></linearGradient><linearGradient id="g167" gradientUnits="userSpaceOnUse" x1="769.1" y1="540.3" x2="768.0" y2="547.5"><stop offset="0" stop-color="#161616"/><stop offset="0.6" stop-color="#464646"/><stop offset="1" stop-color="#737373"/></linearGradient><linearGradient id="g168" gradientUnits="userSpaceOnUse" x1="767.7" y1="549.3" x2="766.6" y2="556.4"><stop offset="0" stop-color="#161616"/><stop offset="0.6" stop-color="#464646"/><stop offset="1" stop-color="#737373"/></linearGradient><linearGradient id="g169" gradientUnits="userSpaceOnUse" x1="766.3" y1="558.2" x2="765.2" y2="565.4"><stop offset="0" stop-color="#161616"/><stop offset="0.6" stop-color="#464646"/><stop offset="1" stop-color="#737373"/></linearGradient><linearGradient id="g170" gradientUnits="userSpaceOnUse" x1="796.6" y1="519.9" x2="813.2" y2="536.6"><stop offset="0" stop-color="#282828"/><stop offset="1" stop-color="#8c8c8c"/></linearGradient><linearGradient id="g171" gradientUnits="userSpaceOnUse" x1="788.3" y1="541.6" x2="806.6" y2="543.3"><stop offset="0" stop-color="#ffffff"/><stop offset="0.25" stop-color="#ebebeb"/><stop offset="0.6" stop-color="#969696"/><stop offset="1" stop-color="#f0f0f0"/></linearGradient><linearGradient id="g172" gradientUnits="userSpaceOnUse" x1="795.8" y1="544.9" x2="806.9" y2="548.2"><stop offset="0" stop-color="#ebebeb"/><stop offset="0.3" stop-color="#5f5f5f"/><stop offset="1" stop-color="#c3c3c3"/></linearGradient><linearGradient id="g173" gradientUnits="userSpaceOnUse" x1="816.6" y1="518.3" x2="866.5" y2="523.3"><stop offset="0" stop-color="#ffffff"/><stop offset="0.08" stop-color="#ebebeb"/><stop offset="0.5" stop-color="#787878"/><stop offset="1" stop-color="#323232"/></linearGradient><linearGradient id="g174" gradientUnits="userSpaceOnUse" x1="863.2" y1="519.9" x2="878.2" y2="521.6"><stop offset="0" stop-color="#ffffff"/><stop offset="0.4" stop-color="#c8c8c8"/><stop offset="1" stop-color="#ebebeb"/></linearGradient><linearGradient id="g175" gradientUnits="userSpaceOnUse" x1="823.2" y1="549.9" x2="836.5" y2="572.4"><stop offset="0" stop-color="#464646"/><stop offset="0.5" stop-color="#969696"/><stop offset="1" stop-color="#d7d7d7"/></linearGradient><linearGradient id="g176" gradientUnits="userSpaceOnUse" x1="800.8" y1="559.9" x2="809.9" y2="560.7"><stop offset="0" stop-color="#8c8c8c"/><stop offset="1" stop-color="#ffffff"/></linearGradient><linearGradient id="g177" gradientUnits="userSpaceOnUse" x1="839.9" y1="574.9" x2="849.9" y2="618.2"><stop offset="0" stop-color="#ebebeb"/><stop offset="0.4" stop-color="#c8c8c8"/><stop offset="1" stop-color="#a5a5a5"/></linearGradient><linearGradient id="g178" gradientUnits="userSpaceOnUse" x1="829.9" y1="625.0" x2="879.8" y2="633.3"><stop offset="0" stop-color="#c8c8c8"/><stop offset="0.3" stop-color="#f5f5f5"/><stop offset="0.6" stop-color="#aaaaaa"/><stop offset="1" stop-color="#ffffff"/></linearGradient><linearGradient id="g179" gradientUnits="userSpaceOnUse" x1="853.2" y1="615.8" x2="854.9" y2="633.3"><stop offset="0" stop-color="#969696"/><stop offset="1" stop-color="#ebebeb"/></linearGradient><linearGradient id="g180" gradientUnits="userSpaceOnUse" x1="829.9" y1="630.0" x2="856.5" y2="633.3"><stop offset="0" stop-color="#ebebeb"/><stop offset="0.5" stop-color="#828282"/><stop offset="1" stop-color="#c8c8c8"/></linearGradient><linearGradient id="g181" gradientUnits="userSpaceOnUse" x1="873.2" y1="678.2" x2="880.7" y2="673.3"><stop offset="0" stop-color="#787878"/><stop offset="0.4" stop-color="#ffffff"/><stop offset="1" stop-color="#ffffff"/></linearGradient><linearGradient id="g182" gradientUnits="userSpaceOnUse" x1="871.5" y1="646.6" x2="913.1" y2="708.2"><stop offset="0" stop-color="#787878"/><stop offset="0.5" stop-color="#b9b9b9"/><stop offset="1" stop-color="#fafafa"/></linearGradient><linearGradient id="g183" gradientUnits="userSpaceOnUse" x1="904.8" y1="678.2" x2="914.8" y2="671.6"><stop offset="0" stop-color="#969696"/><stop offset="0.3" stop-color="#ffffff"/><stop offset="1" stop-color="#ffffff"/></linearGradient><linearGradient id="g184" gradientUnits="userSpaceOnUse" x1="913.1" y1="706.5" x2="912.3" y2="714.9"><stop offset="0" stop-color="#ffffff"/><stop offset="1" stop-color="#b4b4b4"/></linearGradient><linearGradient id="g185" gradientUnits="userSpaceOnUse" x1="906.5" y1="716.5" x2="934.8" y2="733.2"><stop offset="0" stop-color="#6e6e6e"/><stop offset="0.5" stop-color="#e6e6e6"/><stop offset="0.8" stop-color="#ffffff"/><stop offset="1" stop-color="#969696"/></linearGradient><linearGradient id="g186" gradientUnits="userSpaceOnUse" x1="944.8" y1="709.9" x2="958.1" y2="718.2"><stop offset="0" stop-color="#1e1e1e"/><stop offset="0.5" stop-color="#c8c8c8"/><stop offset="1" stop-color="#ffffff"/></linearGradient><linearGradient id="g187" gradientUnits="userSpaceOnUse" x1="855.0" y1="557.4" x2="892.4" y2="546.1"><stop offset="0" stop-color="#d7d7d7"/><stop offset="0.5" stop-color="#ebebeb"/><stop offset="0.85" stop-color="#cdcdcd"/><stop offset="1" stop-color="#aaaaaa"/></linearGradient><linearGradient id="g188" gradientUnits="userSpaceOnUse" x1="889.0" y1="542.4" x2="923.3" y2="544.6"><stop offset="0" stop-color="#5f5f5f"/><stop offset="0.5" stop-color="#c3c3c3"/><stop offset="1" stop-color="#fcfcfc"/></linearGradient><linearGradient id="g189" gradientUnits="userSpaceOnUse" x1="883.0" y1="624.7" x2="922.3" y2="596.7"><stop offset="0" stop-color="#b9b9b9"/><stop offset="0.5" stop-color="#d2d2d2"/><stop offset="1" stop-color="#f5f5f5"/></linearGradient><linearGradient id="g190" gradientUnits="userSpaceOnUse" x1="905.5" y1="624.7" x2="901.8" y2="650.9"><stop offset="0" stop-color="#c8c8c8"/><stop offset="1" stop-color="#969696"/></linearGradient><linearGradient id="g191" gradientUnits="userSpaceOnUse" x1="920.5" y1="613.5" x2="944.8" y2="596.7"><stop offset="0" stop-color="#696969"/><stop offset="0.5" stop-color="#bebebe"/><stop offset="1" stop-color="#f5f5f5"/></linearGradient><linearGradient id="g192" gradientUnits="userSpaceOnUse" x1="933.3" y1="578.3" x2="943.3" y2="601.6"><stop offset="0" stop-color="#8c8c8c"/><stop offset="0.25" stop-color="#ebebeb"/><stop offset="0.5" stop-color="#ffffff"/><stop offset="0.8" stop-color="#e1e1e1"/><stop offset="1" stop-color="#aaaaaa"/></linearGradient><linearGradient id="g193" gradientUnits="userSpaceOnUse" x1="926.6" y1="541.6" x2="931.6" y2="583.3"><stop offset="0" stop-color="#8c8c8c"/><stop offset="0.25" stop-color="#ebebeb"/><stop offset="0.5" stop-color="#ffffff"/><stop offset="0.8" stop-color="#e1e1e1"/><stop offset="1" stop-color="#aaaaaa"/></linearGradient><linearGradient id="g194" gradientUnits="userSpaceOnUse" x1="963.3" y1="626.5" x2="969.9" y2="646.5"><stop offset="0" stop-color="#8c8c8c"/><stop offset="0.25" stop-color="#ebebeb"/><stop offset="0.5" stop-color="#ffffff"/><stop offset="0.8" stop-color="#e1e1e1"/><stop offset="1" stop-color="#aaaaaa"/></linearGradient><linearGradient id="g195" gradientUnits="userSpaceOnUse" x1="958.3" y1="594.9" x2="961.6" y2="629.9"><stop offset="0" stop-color="#8c8c8c"/><stop offset="0.25" stop-color="#ebebeb"/><stop offset="0.5" stop-color="#ffffff"/><stop offset="0.8" stop-color="#e1e1e1"/><stop offset="1" stop-color="#aaaaaa"/></linearGradient></defs>
<polygon points="244.2,529.6 348.2,537.1 348.2,539.9 244.2,531.0" fill="url(#g1)" stroke="url(#g1)" stroke-width="0.6" stroke-linejoin="round"/>
<polygon points="338.2,555.4 378.2,557.4 378.2,559.3 338.2,556.6" fill="url(#g2)" stroke="url(#g2)" stroke-width="0.6" stroke-linejoin="round"/>
<polygon points="297.4,564.1 326.6,562.9 409.8,569.6 409.8,576.9 326.6,571.6 297.4,565.4" fill="url(#g3)" stroke="url(#g3)" stroke-width="0.6" stroke-linejoin="round"/>
<polygon points="326.6,565.7 409.8,571.9 409.8,574.2 326.6,568.6" fill="url(#g4)" stroke="url(#g4)" stroke-width="0.6" stroke-linejoin="round"/>
<polygon points="357.4,585.7 424.8,591.2 424.8,594.2 357.4,587.1" fill="url(#g5)" stroke="url(#g5)" stroke-width="0.6" stroke-linejoin="round"/>
<polygon points="260.0,522.0 333.2,527.0 333.2,530.0 260.0,523.0" fill="url(#g6)" stroke="url(#g6)" stroke-width="0.6" stroke-linejoin="round"/>
<polygon points="252.5,512.6 332.4,515.0 331.6,524.5 252.5,522.0 250.0,520.5 249.2,517.5 250.0,514.3" fill="url(#g7)" stroke="url(#g7)" stroke-width="0.6" stroke-linejoin="round"/>
<polygon points="423.1,501.7 456.4,500.8 489.7,509.6 499.7,520.0 513.0,521.6 513.0,556.6 489.7,568.2 482.2,570.7 480.6,551.6" fill="url(#g8)" stroke="url(#g8)" stroke-width="0.6" stroke-linejoin="round"/>
<polygon points="490.8,563.2 504.9,557.4 547.3,561.6 545.3,585.7 533.2,584.9 524.1,573.2 482.5,569.9 470.0,559.1" fill="url(#g9)" stroke="url(#g9)" stroke-width="0.6" stroke-linejoin="round"/>
<polygon points="338.2,506.6 354.9,502.7 456.4,506.3 489.7,509.6 454.8,515.0" fill="url(#g10)" stroke="url(#g10)" stroke-width="0.6" stroke-linejoin="round"/>
<polyline points="356.5,505.8 383.2,506.6 386.5,504.7 408.1,505.3 409.8,508.0 439.8,508.6 441.4,506.6 469.7,507.5" fill="none" stroke="#464646" stroke-width="1"/>
<polygon points="331.6,527.5 446.4,534.9 480.6,551.6 482.2,570.7 411.5,568.2" fill="#646464" stroke="#646464" stroke-width="0.6" stroke-linejoin="round"/>
<polygon points="331.6,527.5 338.5,527.9 404.8,568.4 399.8,568.2" fill="#f5f5f5" stroke="#f5f5f5" stroke-width="0.6" stroke-linejoin="round"/>
<polygon points="442.4,534.7 446.4,534.9 482.2,570.7 479.3,570.7" fill="#f5f5f5" stroke="#f5f5f5" stroke-width="0.6" stroke-linejoin="round"/>
<polygon points="341.9,528.1 345.9,528.4 410.1,568.6 407.2,568.5" fill="#f5f5f5" stroke="#f5f5f5" stroke-width="0.6" stroke-linejoin="round"/>
<polygon points="357.4,529.1 361.4,529.4 421.2,568.9 418.4,568.8" fill="#f5f5f5" stroke="#f5f5f5" stroke-width="0.6" stroke-linejoin="round"/>
<polygon points="345.9,528.4 357.4,529.1 418.4,568.8 410.1,568.6" fill="#969696" stroke="#969696" stroke-width="0.6" stroke-linejoin="round"/>
<polygon points="361.4,529.4 363.7,529.6 422.9,568.9 421.2,568.9" fill="#282828" stroke="#282828" stroke-width="0.6" stroke-linejoin="round"/>
<polygon points="367.7,529.8 371.8,530.1 428.7,569.1 425.8,569.0" fill="#f5f5f5" stroke="#f5f5f5" stroke-width="0.6" stroke-linejoin="round"/>
<polygon points="383.3,530.8 387.3,531.1 439.8,569.5 436.9,569.4" fill="#f5f5f5" stroke="#f5f5f5" stroke-width="0.6" stroke-linejoin="round"/>
<polygon points="371.8,530.1 383.3,530.8 436.9,569.4 428.7,569.1" fill="#969696" stroke="#969696" stroke-width="0.6" stroke-linejoin="round"/>
<polygon points="387.3,531.1 389.6,531.2 441.4,569.5 439.8,569.5" fill="#282828" stroke="#282828" stroke-width="0.6" stroke-linejoin="round"/>
<polygon points="393.6,531.5 397.6,531.8 447.2,569.7 444.3,569.6" fill="#f5f5f5" stroke="#f5f5f5" stroke-width="0.6" stroke-linejoin="round"/>
<polygon points="409.1,532.5 413.1,532.8 458.3,570.0 455.4,569.9" fill="#f5f5f5" stroke="#f5f5f5" stroke-width="0.6" stroke-linejoin="round"/>
<polygon points="397.6,531.8 409.1,532.5 455.4,569.9 447.2,569.7" fill="#969696" stroke="#969696" stroke-width="0.6" stroke-linejoin="round"/>
<polygon points="413.1,532.8 415.4,532.9 460.0,570.1 458.3,570.0" fill="#282828" stroke="#282828" stroke-width="0.6" stroke-linejoin="round"/>
<polygon points="419.4,533.2 423.5,533.5 465.7,570.2 462.9,570.2" fill="#f5f5f5" stroke="#f5f5f5" stroke-width="0.6" stroke-linejoin="round"/>
<polygon points="434.9,534.2 439.0,534.5 476.9,570.6 474.0,570.5" fill="#f5f5f5" stroke="#f5f5f5" stroke-width="0.6" stroke-linejoin="round"/>
<polygon points="423.5,533.5 434.9,534.2 474.0,570.5 465.7,570.2" fill="#969696" stroke="#969696" stroke-width="0.6" stroke-linejoin="round"/>
<polygon points="439.0,534.5 441.3,534.6 478.5,570.6 476.9,570.6" fill="#282828" stroke="#282828" stroke-width="0.6" stroke-linejoin="round"/>
<polygon points="338.2,506.6 454.8,515.0 446.4,534.9 331.6,527.5" fill="url(#g11)" stroke="url(#g11)" stroke-width="0.6" stroke-linejoin="round"/>
<polygon points="344.9,511.3 348.5,511.6 343.2,527.4 339.6,526.7" fill="url(#g12)" stroke="url(#g12)" stroke-width="0.6" stroke-linejoin="round"/>
<polygon points="364.0,512.6 367.7,512.9 362.4,528.6 358.7,527.9" fill="url(#g13)" stroke="url(#g13)" stroke-width="0.6" stroke-linejoin="round"/>
<polygon points="384.0,514.0 387.7,514.3 382.3,529.8 378.7,529.2" fill="url(#g14)" stroke="url(#g14)" stroke-width="0.6" stroke-linejoin="round"/>
<polygon points="405.6,515.5 409.3,515.9 404.0,531.2 400.3,530.5" fill="url(#g15)" stroke="url(#g15)" stroke-width="0.6" stroke-linejoin="round"/>
<polygon points="429.0,517.2 432.6,517.5 427.3,532.7 423.6,532.0" fill="url(#g16)" stroke="url(#g16)" stroke-width="0.6" stroke-linejoin="round"/>
<polygon points="454.8,515.0 489.7,509.6 480.6,551.6 446.4,534.6" fill="url(#g17)" stroke="url(#g17)" stroke-width="0.6" stroke-linejoin="round"/>
<polygon points="459.8,521.3 483.4,517.0 477.2,545.8 456.1,535.3" fill="url(#g18)" stroke="url(#g18)" stroke-width="0.6" stroke-linejoin="round"/>
<polygon points="413.1,583.2 513.0,589.9 508.9,619.9 479.7,618.2" fill="#6e6e6e" stroke="#6e6e6e" stroke-width="0.6" stroke-linejoin="round"/>
<polygon points="413.1,583.2 420.1,583.7 465.7,614.6 461.4,614.0" fill="#f5f5f5" stroke="#f5f5f5" stroke-width="0.6" stroke-linejoin="round"/>
<polygon points="425.1,584.0 429.1,584.3 471.3,615.2 468.8,614.9" fill="#f5f5f5" stroke="#f5f5f5" stroke-width="0.6" stroke-linejoin="round"/>
<polygon points="440.1,585.0 444.1,585.3 480.5,616.3 478.0,616.0" fill="#f5f5f5" stroke="#f5f5f5" stroke-width="0.6" stroke-linejoin="round"/>
<polygon points="429.1,584.3 440.1,585.0 478.0,616.0 471.3,615.2" fill="#969696" stroke="#969696" stroke-width="0.6" stroke-linejoin="round"/>
<polygon points="444.1,585.3 446.6,585.5 482.1,616.5 480.5,616.3" fill="#282828" stroke="#282828" stroke-width="0.6" stroke-linejoin="round"/>
<polygon points="450.1,585.7 454.1,586.0 486.7,617.1 484.2,616.8" fill="#f5f5f5" stroke="#f5f5f5" stroke-width="0.6" stroke-linejoin="round"/>
<polygon points="465.1,586.7 469.1,587.0 495.9,618.2 493.4,617.9" fill="#f5f5f5" stroke="#f5f5f5" stroke-width="0.6" stroke-linejoin="round"/>
<polygon points="454.1,586.0 465.1,586.7 493.4,617.9 486.7,617.1" fill="#969696" stroke="#969696" stroke-width="0.6" stroke-linejoin="round"/>
<polygon points="469.1,587.0 471.6,587.1 497.5,618.4 495.9,618.2" fill="#282828" stroke="#282828" stroke-width="0.6" stroke-linejoin="round"/>
<polygon points="475.1,587.4 479.1,587.6 502.1,619.0 499.6,618.7" fill="#f5f5f5" stroke="#f5f5f5" stroke-width="0.6" stroke-linejoin="round"/>
<polygon points="490.1,588.4 494.0,588.6 511.3,620.1 508.8,619.8" fill="#f5f5f5" stroke="#f5f5f5" stroke-width="0.6" stroke-linejoin="round"/>
<polygon points="479.1,587.6 490.1,588.4 508.8,619.8 502.1,619.0" fill="#969696" stroke="#969696" stroke-width="0.6" stroke-linejoin="round"/>
<polygon points="494.0,588.6 496.5,588.8 512.9,620.3 511.3,620.1" fill="#282828" stroke="#282828" stroke-width="0.6" stroke-linejoin="round"/>
<polygon points="500.0,589.0 504.0,589.3 517.5,620.8 515.0,620.5" fill="#f5f5f5" stroke="#f5f5f5" stroke-width="0.6" stroke-linejoin="round"/>
<polygon points="515.0,590.0 519.0,590.3 526.7,622.0 524.2,621.7" fill="#f5f5f5" stroke="#f5f5f5" stroke-width="0.6" stroke-linejoin="round"/>
<polygon points="504.0,589.3 515.0,590.0 524.2,621.7 517.5,620.8" fill="#969696" stroke="#969696" stroke-width="0.6" stroke-linejoin="round"/>
<polygon points="519.0,590.3 521.5,590.5 528.3,622.2 526.7,622.0" fill="#282828" stroke="#282828" stroke-width="0.6" stroke-linejoin="round"/>
<polygon points="513.0,588.2 526.3,582.4 523.0,618.2 508.9,619.9" fill="url(#g19)" stroke="url(#g19)" stroke-width="0.6" stroke-linejoin="round"/>
<polygon points="419.0,567.9 523.0,573.2 523.0,584.1 513.0,589.9 413.1,583.2" fill="url(#g20)" stroke="url(#g20)" stroke-width="0.6" stroke-linejoin="round"/>
<polygon points="409.8,569.9 421.5,567.9 419.5,580.7 413.1,583.6" fill="url(#g21)" stroke="url(#g21)" stroke-width="0.6" stroke-linejoin="round"/>
<polygon points="693.4,540.0 748.1,540.0 748.1,570.4 751.1,574.4 785.5,565.3 798.7,578.5 801.7,582.5 826.0,624.0 836.2,630.1 836.2,643.3 816.9,640.2 811.9,661.5 805.8,664.5 791.6,665.6 803.8,666.6 800.7,684.8 799.7,692.9 763.3,692.9 761.2,696.9 746.1,703.0 720.7,679.7 660.0,676.7 660.0,620.0 673.2,637.0 675.2,593.7 680.2,588.6 693.4,573.4" fill="#fdfdfd" stroke="#fdfdfd" stroke-width="0.6" stroke-linejoin="round"/>
<polygon points="548.3,489.1 594.9,489.9 599.9,524.9 548.3,523.6" fill="url(#g22)" stroke="url(#g22)" stroke-width="0.6" stroke-linejoin="round"/>
<polygon points="599.9,516.2 671.5,520.2 692.3,529.5 669.0,531.5 513.3,523.6 514.1,521.2 599.9,524.9" fill="url(#g23)" stroke="url(#g23)" stroke-width="0.6" stroke-linejoin="round"/>
<polygon points="669.0,528.6 749.7,534.9 765.2,574.8 674.8,574.8 664.9,528.2" fill="#fafafa" stroke="#fafafa" stroke-width="0.6" stroke-linejoin="round"/>
<polygon points="673.0,528.9 675.8,529.1 691.3,574.8 688.5,574.8" fill="#282828" stroke="#282828" stroke-width="0.6" stroke-linejoin="round"/>
<polygon points="675.8,529.1 678.7,529.3 694.1,574.8 691.3,574.8" fill="#969696" stroke="#969696" stroke-width="0.6" stroke-linejoin="round"/>
<polygon points="681.5,529.5 684.3,529.8 699.8,574.8 697.0,574.8" fill="#282828" stroke="#282828" stroke-width="0.6" stroke-linejoin="round"/>
<polygon points="684.3,529.8 686.7,529.9 702.2,574.8 699.8,574.8" fill="#969696" stroke="#969696" stroke-width="0.6" stroke-linejoin="round"/>
<polygon points="690.0,530.2 692.4,530.4 707.9,574.8 705.4,574.8" fill="#282828" stroke="#282828" stroke-width="0.6" stroke-linejoin="round"/>
<polygon points="692.4,530.4 695.6,530.6 711.1,574.8 707.9,574.8" fill="#a0a0a0" stroke="#a0a0a0" stroke-width="0.6" stroke-linejoin="round"/>
<polygon points="698.0,530.8 704.5,531.3 720.0,574.8 713.5,574.8" fill="url(#g24)" stroke="url(#g24)" stroke-width="0.6" stroke-linejoin="round"/>
<polygon points="709.3,531.7 712.6,532.0 728.0,574.8 724.8,574.8" fill="#323232" stroke="#323232" stroke-width="0.6" stroke-linejoin="round"/>
<polygon points="712.6,532.0 715.0,532.2 730.5,574.8 728.0,574.8" fill="#aaaaaa" stroke="#aaaaaa" stroke-width="0.6" stroke-linejoin="round"/>
<polygon points="719.8,532.5 722.3,532.7 737.7,574.8 735.3,574.8" fill="#5a5a5a" stroke="#5a5a5a" stroke-width="0.6" stroke-linejoin="round"/>
<polygon points="722.3,532.7 724.7,532.9 740.2,574.8 737.7,574.8" fill="#bebebe" stroke="#bebebe" stroke-width="0.6" stroke-linejoin="round"/>
<polygon points="727.1,533.1 749.7,534.9 765.2,574.8 742.6,574.8" fill="url(#g25)" stroke="url(#g25)" stroke-width="0.6" stroke-linejoin="round"/>
<polygon points="513.3,523.2 669.0,530.7 664.8,545.7 599.9,544.0 546.6,558.2 505.8,556.5" fill="#fafafa" stroke="#fafafa" stroke-width="0.6" stroke-linejoin="round"/>
<polygon points="520.0,529.5 663.1,535.7 661.5,541.9 604.9,540.2 548.3,554.4 515.0,550.2" fill="url(#g26)" stroke="url(#g26)" stroke-width="0.6" stroke-linejoin="round"/>
<polygon points="552.4,532.3 557.4,532.4 553.3,552.1 548.3,553.1" fill="url(#g27)" stroke="url(#g27)" stroke-width="0.6" stroke-linejoin="round"/>
<polygon points="561.6,532.7 566.6,532.8 562.4,549.9 557.4,550.9" fill="url(#g28)" stroke="url(#g28)" stroke-width="0.6" stroke-linejoin="round"/>
<polygon points="570.7,533.1 575.7,533.2 571.6,547.6 566.6,548.6" fill="url(#g29)" stroke="url(#g29)" stroke-width="0.6" stroke-linejoin="round"/>
<polygon points="579.9,533.5 584.9,533.6 580.7,545.3 575.7,546.3" fill="url(#g30)" stroke="url(#g30)" stroke-width="0.6" stroke-linejoin="round"/>
<polygon points="588.2,534.0 663.1,536.2 661.8,541.5 616.5,540.4 589.9,541.5" fill="url(#g31)" stroke="url(#g31)" stroke-width="0.6" stroke-linejoin="round"/>
<polygon points="623.2,536.2 627.8,536.4 627.2,543.5 622.5,543.4" fill="url(#g32)" stroke="url(#g32)" stroke-width="0.6" stroke-linejoin="round"/>
<polygon points="631.5,536.2 636.2,536.4 635.5,543.5 630.8,543.4" fill="url(#g33)" stroke="url(#g33)" stroke-width="0.6" stroke-linejoin="round"/>
<polygon points="639.8,536.2 644.5,536.4 643.8,543.5 639.2,543.4" fill="url(#g34)" stroke="url(#g34)" stroke-width="0.6" stroke-linejoin="round"/>
<polygon points="648.2,536.2 652.8,536.4 652.2,543.5 647.5,543.4" fill="url(#g35)" stroke="url(#g35)" stroke-width="0.6" stroke-linejoin="round"/>
<polygon points="656.5,536.2 661.1,536.4 660.5,543.5 655.8,543.4" fill="url(#g36)" stroke="url(#g36)" stroke-width="0.6" stroke-linejoin="round"/>
<polyline points="501.7,535.5 556.6,537.9 616.5,540.2" fill="none" stroke="#141414" stroke-width="1.2"/>
<polygon points="548.3,556.5 604.9,544.5 596.5,549.0 548.3,564.0" fill="#000000" stroke="#000000" stroke-width="0.6" stroke-linejoin="round"/>
<polygon points="548.3,563.5 606.5,544.9 696.4,548.7 673.1,577.8 546.6,570.5" fill="url(#g37)" stroke="url(#g37)" stroke-width="0.6" stroke-linejoin="round"/>
<polygon points="696.4,548.7 692.3,574.8 673.1,577.8" fill="url(#g38)" stroke="url(#g38)" stroke-width="0.6" stroke-linejoin="round"/>
<polygon points="503.3,468.6 520.8,471.6 604.9,474.9 618.2,489.9 538.3,486.9" fill="url(#g39)" stroke="url(#g39)" stroke-width="0.6" stroke-linejoin="round"/>
<polygon points="532.5,477.6 596.5,478.3 607.4,488.3 541.6,485.9" fill="#fafafa" stroke="#fafafa" stroke-width="0.6" stroke-linejoin="round"/>
<polygon points="539.9,480.3 593.6,480.8 599.9,485.9 545.3,484.3" fill="url(#g40)" stroke="url(#g40)" stroke-width="0.6" stroke-linejoin="round"/>
<polygon points="604.9,456.3 633.2,451.6 623.2,482.4 618.2,489.9 604.9,474.9" fill="url(#g41)" stroke="url(#g41)" stroke-width="0.6" stroke-linejoin="round"/>
<polygon points="503.3,468.6 511.6,440.8 525.8,439.7 520.0,452.5 520.8,471.6" fill="url(#g42)" stroke="url(#g42)" stroke-width="0.6" stroke-linejoin="round"/>
<polygon points="525.8,439.7 624.8,441.6 633.2,451.6 604.9,456.3 559.9,453.0 520.0,452.5" fill="url(#g43)" stroke="url(#g43)" stroke-width="0.6" stroke-linejoin="round"/>
<polygon points="528.6,439.8 529.6,439.8 523.3,452.6 522.3,452.6" fill="#464646" stroke="#464646" stroke-width="0.6" stroke-linejoin="round"/>
<polygon points="526.0,439.8 528.6,439.8 522.3,452.6 519.6,452.6" fill="#f5f5f5" stroke="#f5f5f5" stroke-width="0.6" stroke-linejoin="round"/>
<polygon points="539.4,439.8 540.4,439.8 534.1,452.6 533.1,452.6" fill="#464646" stroke="#464646" stroke-width="0.6" stroke-linejoin="round"/>
<polygon points="536.8,439.8 539.4,439.8 533.1,452.6 530.5,452.6" fill="#f5f5f5" stroke="#f5f5f5" stroke-width="0.6" stroke-linejoin="round"/>
<polygon points="550.3,439.8 551.3,439.8 544.9,452.6 543.9,452.6" fill="#464646" stroke="#464646" stroke-width="0.6" stroke-linejoin="round"/>
<polygon points="547.6,439.8 550.3,439.8 543.9,452.6 541.3,452.6" fill="#f5f5f5" stroke="#f5f5f5" stroke-width="0.6" stroke-linejoin="round"/>
<polygon points="563.3,439.8 564.2,439.8 557.9,452.6 556.9,452.6" fill="#464646" stroke="#464646" stroke-width="0.6" stroke-linejoin="round"/>
<polygon points="560.6,439.8 563.3,439.8 556.9,452.6 554.3,452.6" fill="#f5f5f5" stroke="#f5f5f5" stroke-width="0.6" stroke-linejoin="round"/>
<polygon points="596.5,441.3 599.9,441.3 591.6,455.0 588.2,454.6" fill="#f0f0f0" stroke="#f0f0f0" stroke-width="0.6" stroke-linejoin="round"/>
<polygon points="520.0,452.5 559.9,453.0 604.9,456.3 604.9,474.9 520.8,471.6" fill="#ffffff" stroke="#ffffff" stroke-width="0.6" stroke-linejoin="round"/>
<polygon points="521.3,452.6 522.8,452.6 522.8,471.9 521.3,471.8" fill="url(#g44)" stroke="url(#g44)" stroke-width="0.6" stroke-linejoin="round"/>
<polygon points="531.6,452.6 533.1,452.6 533.1,471.9 531.6,471.8" fill="url(#g45)" stroke="url(#g45)" stroke-width="0.6" stroke-linejoin="round"/>
<polygon points="542.4,452.6 543.9,452.6 543.9,471.9 542.4,471.8" fill="url(#g46)" stroke="url(#g46)" stroke-width="0.6" stroke-linejoin="round"/>
<polygon points="555.8,452.6 557.3,452.6 557.3,471.9 555.8,471.8" fill="url(#g47)" stroke="url(#g47)" stroke-width="0.6" stroke-linejoin="round"/>
<polygon points="604.9,457.5 649.8,450.0 656.5,448.3 662.3,455.0 663.1,479.9 656.5,487.9 649.8,486.9 604.9,474.9" fill="url(#g48)" stroke="url(#g48)" stroke-width="0.6" stroke-linejoin="round"/>
<ellipse cx="654.8" cy="468.0" rx="6.5" ry="19.5" fill="#ffffff" stroke="#787878" stroke-width="0.8"/>
<polygon points="652.3,457.6 810.0,471.6 810.0,472.6 652.3,478.6" fill="url(#g49)" stroke="url(#g49)" stroke-width="0.6" stroke-linejoin="round"/>
<polygon points="726.2,532.4 749.2,536.5 743.8,570.3 748.1,574.4 742.4,584.5 734.9,561.3" fill="url(#g50)" stroke="url(#g50)" stroke-width="0.6" stroke-linejoin="round"/>
<polygon points="742.3,581.0 747.7,573.6 800.4,580.3 812.5,594.5 808.5,602.6 735.6,589.8" fill="url(#g51)" stroke="url(#g51)" stroke-width="0.6" stroke-linejoin="round"/>
<polygon points="749.1,573.9 785.5,565.3 797.7,578.0 751.1,574.9" fill="#ffffff" stroke="#ffffff" stroke-width="0.6" stroke-linejoin="round"/>
<polygon points="681.8,593.1 683.5,593.2 681.0,610.9 674.6,619.9 672.6,619.9 679.2,610.9" fill="url(#g52)" stroke="url(#g52)" stroke-width="0.6" stroke-linejoin="round"/>
<polygon points="683.5,593.2 686.4,593.2 684.0,610.9 678.2,619.9 674.6,619.9 681.0,610.9" fill="url(#g53)" stroke="url(#g53)" stroke-width="0.6" stroke-linejoin="round"/>
<polygon points="686.4,593.2 689.5,593.3 687.2,610.9 682.0,619.9 678.2,619.9 684.0,610.9" fill="url(#g54)" stroke="url(#g54)" stroke-width="0.6" stroke-linejoin="round"/>
<polygon points="689.5,593.3 691.2,593.3 689.0,610.9 684.1,619.9 682.0,619.9 687.2,610.9" fill="url(#g55)" stroke="url(#g55)" stroke-width="0.6" stroke-linejoin="round"/>
<polygon points="691.2,593.3 694.1,593.4 692.0,610.9 687.7,619.9 684.1,619.9 689.0,610.9" fill="url(#g56)" stroke="url(#g56)" stroke-width="0.6" stroke-linejoin="round"/>
<polygon points="694.1,593.4 697.2,593.4 695.2,610.9 691.5,619.9 687.7,619.9 692.0,610.9" fill="url(#g57)" stroke="url(#g57)" stroke-width="0.6" stroke-linejoin="round"/>
<polygon points="697.2,593.4 698.9,593.4 696.9,610.9 693.6,619.9 691.5,619.9 695.2,610.9" fill="url(#g58)" stroke="url(#g58)" stroke-width="0.6" stroke-linejoin="round"/>
<polygon points="698.9,593.4 701.8,593.5 700.0,610.9 697.2,619.9 693.6,619.9 696.9,610.9" fill="url(#g59)" stroke="url(#g59)" stroke-width="0.6" stroke-linejoin="round"/>
<polygon points="701.8,593.5 704.9,593.5 703.2,610.9 701.0,619.9 697.2,619.9 700.0,610.9" fill="url(#g60)" stroke="url(#g60)" stroke-width="0.6" stroke-linejoin="round"/>
<polygon points="704.9,593.5 706.6,593.6 704.9,610.9 703.1,619.9 701.0,619.9 703.2,610.9" fill="url(#g61)" stroke="url(#g61)" stroke-width="0.6" stroke-linejoin="round"/>
<polygon points="706.6,593.6 709.6,593.6 707.9,610.9 706.7,619.9 703.1,619.9 704.9,610.9" fill="url(#g62)" stroke="url(#g62)" stroke-width="0.6" stroke-linejoin="round"/>
<polygon points="709.6,593.6 712.6,593.7 711.1,610.9 710.5,619.9 706.7,619.9 707.9,610.9" fill="url(#g63)" stroke="url(#g63)" stroke-width="0.6" stroke-linejoin="round"/>
<polygon points="672.6,619.9 674.6,619.9 676.1,633.8 696.8,652.7 695.3,652.6 674.2,633.7" fill="url(#g64)" stroke="url(#g64)" stroke-width="0.6" stroke-linejoin="round"/>
<polygon points="674.6,619.9 678.2,619.9 679.4,633.9 699.3,652.7 696.8,652.7 676.1,633.8" fill="url(#g65)" stroke="url(#g65)" stroke-width="0.6" stroke-linejoin="round"/>
<polygon points="678.2,619.9 682.0,619.9 682.9,634.0 702.0,652.8 699.3,652.7 679.4,633.9" fill="url(#g66)" stroke="url(#g66)" stroke-width="0.6" stroke-linejoin="round"/>
<polygon points="682.0,619.9 684.1,619.9 684.8,634.0 703.4,652.8 702.0,652.8 682.9,634.0" fill="url(#g67)" stroke="url(#g67)" stroke-width="0.6" stroke-linejoin="round"/>
<polygon points="684.1,619.9 687.7,619.9 688.1,634.1 705.9,652.9 703.4,652.8 684.8,634.0" fill="url(#g68)" stroke="url(#g68)" stroke-width="0.6" stroke-linejoin="round"/>
<polygon points="687.7,619.9 691.5,619.9 691.5,634.2 708.6,653.0 705.9,652.9 688.1,634.1" fill="url(#g69)" stroke="url(#g69)" stroke-width="0.6" stroke-linejoin="round"/>
<polygon points="691.5,619.9 693.6,619.9 693.4,634.2 710.0,653.0 708.6,653.0 691.5,634.2" fill="url(#g70)" stroke="url(#g70)" stroke-width="0.6" stroke-linejoin="round"/>
<polygon points="693.6,619.9 697.2,619.9 696.7,634.3 712.6,653.1 710.0,653.0 693.4,634.2" fill="url(#g71)" stroke="url(#g71)" stroke-width="0.6" stroke-linejoin="round"/>
<polygon points="697.2,619.9 701.0,619.9 700.2,634.4 715.2,653.1 712.6,653.1 696.7,634.3" fill="url(#g72)" stroke="url(#g72)" stroke-width="0.6" stroke-linejoin="round"/>
<polygon points="701.0,619.9 703.1,619.9 702.1,634.4 716.7,653.2 715.2,653.1 700.2,634.4" fill="url(#g73)" stroke="url(#g73)" stroke-width="0.6" stroke-linejoin="round"/>
<polygon points="703.1,619.9 706.7,619.9 705.4,634.5 719.2,653.3 716.7,653.2 702.1,634.4" fill="url(#g74)" stroke="url(#g74)" stroke-width="0.6" stroke-linejoin="round"/>
<polygon points="706.7,619.9 710.5,619.9 708.8,634.6 721.8,653.3 719.2,653.3 705.4,634.5" fill="url(#g75)" stroke="url(#g75)" stroke-width="0.6" stroke-linejoin="round"/>
<polygon points="680.2,588.6 693.4,573.4 702.5,580.5 693.4,592.6" fill="url(#g76)" stroke="url(#g76)" stroke-width="0.6" stroke-linejoin="round"/>
<polyline points="693.4,573.9 703.5,584.5 710.6,594.2" fill="none" stroke="#c8c8c8" stroke-width="1"/>
<polygon points="749.1,609.9 764.8,618.0 762.2,637.0 746.1,637.0" fill="url(#g77)" stroke="url(#g77)" stroke-width="0.6" stroke-linejoin="round"/>
<polygon points="748.1,620.0 763.3,620.0 761.2,640.2 757.2,646.8 746.1,639.2" fill="url(#g78)" stroke="url(#g78)" stroke-width="0.6" stroke-linejoin="round"/>
<polygon points="761.2,629.1 801.7,626.1 795.7,646.3 809.8,660.5 805.8,664.5 757.2,653.4 757.2,646.8" fill="url(#g79)" stroke="url(#g79)" stroke-width="0.6" stroke-linejoin="round"/>
<polygon points="770.3,631.1 772.4,628.6 781.5,628.6 784.5,631.1 783.0,639.2 767.3,640.2 770.3,636.2" fill="url(#g80)" stroke="url(#g80)" stroke-width="0.6" stroke-linejoin="round"/>
<polygon points="801.7,626.1 807.8,622.0 836.2,630.1 836.2,643.3 816.9,640.2 811.9,661.5 795.7,646.3" fill="#ffffff" stroke="#ffffff" stroke-width="0.6" stroke-linejoin="round"/>
<polygon points="807.8,622.0 835.1,627.1 836.7,643.8 816.9,640.2 815.9,629.1" fill="url(#g81)" stroke="url(#g81)" stroke-width="0.6" stroke-linejoin="round"/>
<polygon points="719.7,651.6 798.7,658.5 808.8,664.5 791.6,665.8 749.1,659.7 720.7,654.9" fill="url(#g82)" stroke="url(#g82)" stroke-width="0.6" stroke-linejoin="round"/>
<polygon points="749.1,659.5 791.6,665.6 788.6,682.8 799.7,692.9 763.3,692.9 761.2,696.9 744.0,684.8" fill="url(#g83)" stroke="url(#g83)" stroke-width="0.6" stroke-linejoin="round"/>
<polygon points="791.6,665.6 803.8,666.6 800.7,684.8 799.7,692.9 788.6,682.8" fill="url(#g84)" stroke="url(#g84)" stroke-width="0.6" stroke-linejoin="round"/>
<polygon points="800.7,680.7 836.2,700.7 799.7,695.1" fill="url(#g85)" stroke="url(#g85)" stroke-width="0.6" stroke-linejoin="round"/>
<polygon points="722.3,656.5 724.3,656.8 721.8,679.6 733.1,700.9 730.8,701.2 720.1,679.3" fill="url(#g86)" stroke="url(#g86)" stroke-width="0.6" stroke-linejoin="round"/>
<polygon points="724.3,656.8 727.7,657.3 724.8,680.1 737.2,700.3 733.1,700.9 721.8,679.6" fill="url(#g87)" stroke="url(#g87)" stroke-width="0.6" stroke-linejoin="round"/>
<polygon points="727.7,657.3 731.3,657.8 727.9,680.7 741.5,699.7 737.2,700.3 724.8,680.1" fill="url(#g88)" stroke="url(#g88)" stroke-width="0.6" stroke-linejoin="round"/>
<polygon points="731.3,657.8 733.3,658.0 729.6,681.0 743.8,699.3 741.5,699.7 727.9,680.7" fill="url(#g89)" stroke="url(#g89)" stroke-width="0.6" stroke-linejoin="round"/>
<polygon points="733.3,658.0 736.7,658.5 732.6,681.6 747.9,698.7 743.8,699.3 729.6,681.0" fill="url(#g90)" stroke="url(#g90)" stroke-width="0.6" stroke-linejoin="round"/>
<polygon points="736.7,658.5 740.3,659.0 735.7,682.1 752.1,698.1 747.9,698.7 732.6,681.6" fill="url(#g91)" stroke="url(#g91)" stroke-width="0.6" stroke-linejoin="round"/>
<polygon points="740.3,659.0 742.3,659.3 737.4,682.4 754.5,697.7 752.1,698.1 735.7,682.1" fill="url(#g92)" stroke="url(#g92)" stroke-width="0.6" stroke-linejoin="round"/>
<polygon points="742.3,659.3 745.7,659.7 740.3,683.0 758.5,697.1 754.5,697.7 737.4,682.4" fill="url(#g93)" stroke="url(#g93)" stroke-width="0.6" stroke-linejoin="round"/>
<polygon points="745.7,659.7 749.3,660.2 743.4,683.5 762.8,696.5 758.5,697.1 740.3,683.0" fill="url(#g94)" stroke="url(#g94)" stroke-width="0.6" stroke-linejoin="round"/>
<polygon points="666.1,584.5 677.2,584.5 675.2,637.0 664.0,637.0" fill="#cdcdcd" stroke="#cdcdcd" stroke-width="0.6" stroke-linejoin="round"/>
<polygon points="508.8,619.8 513.0,587.0 526.0,582.0 535.0,585.0 541.0,633.0 520.0,629.0" fill="url(#g95)" stroke="url(#g95)" stroke-width="0.6" stroke-linejoin="round"/>
<polygon points="545.3,569.6 673.4,578.2 668.8,585.8 543.8,580.0" fill="url(#g96)" stroke="url(#g96)" stroke-width="0.6" stroke-linejoin="round"/>
<polygon points="655.7,586.5 669.8,585.0 678.4,591.5 664.8,630.3 652.6,615.6 642.5,613.1" fill="url(#g97)" stroke="url(#g97)" stroke-width="0.6" stroke-linejoin="round"/>
<polygon points="666.8,590.3 673.9,594.9 665.8,597.4" fill="url(#g98)" stroke="url(#g98)" stroke-width="0.6" stroke-linejoin="round"/>
<polygon points="664.6,597.9 672.1,602.5 663.6,605.0" fill="url(#g99)" stroke="url(#g99)" stroke-width="0.6" stroke-linejoin="round"/>
<polygon points="662.3,605.5 670.2,610.1 661.3,612.6" fill="url(#g100)" stroke="url(#g100)" stroke-width="0.6" stroke-linejoin="round"/>
<polygon points="660.1,613.1 668.4,617.6 659.1,620.2" fill="url(#g101)" stroke="url(#g101)" stroke-width="0.6" stroke-linejoin="round"/>
<polygon points="529.6,602.7 545.1,580.2 655.7,586.5 647.1,610.6 652.6,615.6 650.6,617.8 533.2,607.5" fill="#fcfcfc" stroke="#fcfcfc" stroke-width="0.6" stroke-linejoin="round"/>
<polygon points="537.7,597.9 547.5,582.8 650.6,588.9 638.4,609.1" fill="url(#g102)" stroke="url(#g102)" stroke-width="0.6" stroke-linejoin="round"/>
<polygon points="539.2,595.9 547.1,584.2 555.4,584.6 547.8,596.9" fill="#fafafa" stroke="#fafafa" stroke-width="0.6" stroke-linejoin="round"/>
<polygon points="542.1,594.4 548.5,585.7 553.2,585.9 546.5,595.0" fill="url(#g103)" stroke="url(#g103)" stroke-width="0.6" stroke-linejoin="round"/>
<polygon points="550.4,596.9 558.3,584.8 566.6,585.2 559.0,597.9" fill="#fafafa" stroke="#fafafa" stroke-width="0.6" stroke-linejoin="round"/>
<polygon points="553.2,595.4 559.7,586.2 564.3,586.4 557.7,596.0" fill="url(#g104)" stroke="url(#g104)" stroke-width="0.6" stroke-linejoin="round"/>
<polygon points="564.5,598.2 572.4,585.5 580.7,585.9 573.1,599.2" fill="#fafafa" stroke="#fafafa" stroke-width="0.6" stroke-linejoin="round"/>
<polygon points="567.4,596.6 573.9,586.9 578.5,587.1 571.8,597.2" fill="url(#g105)" stroke="url(#g105)" stroke-width="0.6" stroke-linejoin="round"/>
<polygon points="575.7,599.9 586.3,585.8 590.4,586.0 579.7,600.4" fill="url(#g106)" stroke="url(#g106)" stroke-width="0.6" stroke-linejoin="round"/>
<polygon points="583.8,600.7 594.4,585.8 598.5,586.0 587.8,601.2" fill="url(#g107)" stroke="url(#g107)" stroke-width="0.6" stroke-linejoin="round"/>
<polygon points="591.9,601.5 602.5,585.8 606.6,586.0 595.9,602.1" fill="url(#g108)" stroke="url(#g108)" stroke-width="0.6" stroke-linejoin="round"/>
<polygon points="608.1,604.5 617.2,588.8 647.6,590.3 637.4,608.0" fill="url(#g109)" stroke="url(#g109)" stroke-width="0.6" stroke-linejoin="round"/>
<polyline points="611.1,598.4 643.5,600.4" fill="none" stroke="#323232" stroke-width="1.5"/>
<polyline points="614.2,594.4 645.5,595.9" fill="none" stroke="#5a5a5a" stroke-width="1"/>
<polygon points="533.2,607.5 650.6,617.6 665.8,631.8 553.4,621.7" fill="#fafafa" stroke="#fafafa" stroke-width="0.6" stroke-linejoin="round"/>
<polygon points="550.4,610.8 636.4,618.1 648.6,629.4 560.5,621.7" fill="url(#g110)" stroke="url(#g110)" stroke-width="0.6" stroke-linejoin="round"/>
<polygon points="538.2,620.2 551.9,627.0 558.5,630.0 553.9,632.6 539.7,632.6" fill="url(#g111)" stroke="url(#g111)" stroke-width="0.6" stroke-linejoin="round"/>
<polygon points="536.2,608.5 540.8,607.3 552.9,617.6 551.9,627.0 538.2,620.2" fill="url(#g112)" stroke="url(#g112)" stroke-width="0.6" stroke-linejoin="round"/>
<polygon points="553.4,621.7 665.8,631.8 675.9,642.4 639.5,641.1 584.8,634.0 567.6,638.7 558.5,630.0" fill="url(#g113)" stroke="url(#g113)" stroke-width="0.6" stroke-linejoin="round"/>
<polygon points="560.0,632.0 671.4,640.1 684.5,651.8 651.1,650.9 604.5,646.6 575.2,643.4 560.0,636.3" fill="#fcfcfc" stroke="#fcfcfc" stroke-width="0.6" stroke-linejoin="round"/>
<polygon points="582.3,664.4 610.6,674.5 630.9,682.6 732.1,701.4 740.0,699.9 722.0,680.6 639.0,673.5" fill="url(#g114)" stroke="url(#g114)" stroke-width="0.6" stroke-linejoin="round"/>
<polygon points="566.1,659.4 576.2,643.0 604.5,646.2 605.6,666.6 582.8,664.9" fill="url(#g115)" stroke="url(#g115)" stroke-width="0.6" stroke-linejoin="round"/>
<polygon points="604.5,646.2 727.0,657.5 721.5,680.8 639.0,673.7 605.6,666.6" fill="url(#g116)" stroke="url(#g116)" stroke-width="0.6" stroke-linejoin="round"/>
<polygon points="605.6,666.6 639.0,673.7 659.2,671.3 630.9,668.5" fill="url(#g117)" stroke="url(#g117)" stroke-width="0.6" stroke-linejoin="round"/>
<polygon points="585.3,665.4 602.5,667.0 610.6,674.5 593.4,672.5" fill="#7d7d7d" stroke="#7d7d7d" stroke-width="0.6" stroke-linejoin="round"/>
<polygon points="648.9,680.7 684.4,685.7 694.5,694.8 659.1,691.1" fill="url(#g118)" stroke="url(#g118)" stroke-width="0.6" stroke-linejoin="round"/>
<polygon points="694.5,684.4 719.0,687.7 733.3,699.9 706.3,696.5" fill="url(#g119)" stroke="url(#g119)" stroke-width="0.6" stroke-linejoin="round"/>
<polygon points="581.8,639.6 595.6,642.4 582.5,677.8" fill="url(#g120)" stroke="url(#g120)" stroke-width="0.6" stroke-linejoin="round"/>
<polygon points="638.2,645.0 649.3,648.8 635.4,682.6 636.9,660.4" fill="url(#g121)" stroke="url(#g121)" stroke-width="0.6" stroke-linejoin="round"/>
<polygon points="630.9,689.2 635.4,681.6 646.3,685.2 634.7,718.3" fill="url(#g122)" stroke="url(#g122)" stroke-width="0.6" stroke-linejoin="round"/>
<polygon points="687.4,685.2 696.9,688.7 685.3,723.6" fill="url(#g123)" stroke="url(#g123)" stroke-width="0.6" stroke-linejoin="round"/>
<polygon points="880.2,523.7 934.9,482.5 929.8,518.1 921.4,519.9 894.3,519.0 880.2,527.4" fill="url(#g124)" stroke="url(#g124)" stroke-width="0.6" stroke-linejoin="round"/>
<polygon points="934.9,482.5 959.8,482.5 949.5,549.9 947.6,540.5 937.3,539.6 921.4,519.9 929.8,518.1" fill="url(#g125)" stroke="url(#g125)" stroke-width="0.6" stroke-linejoin="round"/>
<polygon points="959.8,482.5 972.9,508.7 964.4,551.8 949.5,549.9" fill="url(#g126)" stroke="url(#g126)" stroke-width="0.6" stroke-linejoin="round"/>
<polygon points="751.6,527.4 791.9,517.4 787.4,563.6 742.5,570.7" fill="#141414" stroke="#141414" stroke-width="0.6" stroke-linejoin="round"/>
<polygon points="751.6,527.4 791.9,517.4 791.2,524.8 750.2,534.4" fill="url(#g127)" stroke="url(#g127)" stroke-width="0.6" stroke-linejoin="round"/>
<polygon points="749.8,536.1 791.0,526.7 790.3,534.0 748.3,543.0" fill="url(#g128)" stroke="url(#g128)" stroke-width="0.6" stroke-linejoin="round"/>
<polygon points="748.0,544.7 790.1,535.9 789.4,543.3 746.5,551.7" fill="url(#g129)" stroke="url(#g129)" stroke-width="0.6" stroke-linejoin="round"/>
<polygon points="746.1,553.4 789.2,545.1 788.5,552.5 744.7,560.3" fill="url(#g130)" stroke="url(#g130)" stroke-width="0.6" stroke-linejoin="round"/>
<polygon points="744.3,562.1 788.3,554.3 787.6,561.7 742.9,569.0" fill="url(#g131)" stroke="url(#g131)" stroke-width="0.6" stroke-linejoin="round"/>
<polygon points="791.9,517.4 815.2,519.9 810.2,540.8 807.9,538.6" fill="url(#g132)" stroke="url(#g132)" stroke-width="0.6" stroke-linejoin="round"/>
<polygon points="791.9,517.4 808.2,538.3 799.9,579.0 787.4,563.6" fill="url(#g133)" stroke="url(#g133)" stroke-width="0.6" stroke-linejoin="round"/>
<polygon points="798.3,532.4 807.4,541.9 804.1,569.9 793.3,559.1" fill="url(#g134)" stroke="url(#g134)" stroke-width="0.6" stroke-linejoin="round"/>
<polygon points="747.8,573.2 787.4,563.6 800.4,579.9" fill="#ffffff" stroke="#ffffff" stroke-width="0.6" stroke-linejoin="round"/>
<polygon points="819.9,499.1 871.5,500.0 859.0,541.9 811.6,539.9" fill="url(#g135)" stroke="url(#g135)" stroke-width="0.6" stroke-linejoin="round"/>
<polyline points="811.6,539.9 819.9,499.1 871.5,500.0" fill="none" stroke="#ffffff" stroke-width="1.2"/>
<polygon points="871.5,500.0 880.2,518.3 868.2,540.8 859.0,541.9" fill="url(#g136)" stroke="url(#g136)" stroke-width="0.6" stroke-linejoin="round"/>
<polyline points="870.0,505.0 880.2,518.3" fill="none" stroke="#6e6e6e" stroke-width="0.7"/>
<polyline points="867.5,513.4 876.8,524.6" fill="none" stroke="#6e6e6e" stroke-width="0.7"/>
<polyline points="865.0,521.8 873.5,530.9" fill="none" stroke="#6e6e6e" stroke-width="0.7"/>
<polyline points="862.5,530.2 870.1,537.2" fill="none" stroke="#6e6e6e" stroke-width="0.7"/>
<polygon points="808.2,538.3 811.6,539.9 859.0,541.9 868.2,540.8 856.5,549.1 850.2,574.5 803.3,581.2 799.9,579.0" fill="#fcfcfc" stroke="#fcfcfc" stroke-width="0.6" stroke-linejoin="round"/>
<polygon points="818.2,549.9 852.4,550.2 846.5,571.9 814.9,571.9" fill="url(#g137)" stroke="url(#g137)" stroke-width="0.6" stroke-linejoin="round"/>
<polygon points="808.2,538.3 811.6,539.9 803.3,581.2 799.9,579.0" fill="url(#g138)" stroke="url(#g138)" stroke-width="0.6" stroke-linejoin="round"/>
<polygon points="801.7,582.5 811.9,584.5 827.5,619.0 826.0,624.0" fill="#000000" stroke="#000000" stroke-width="0.6" stroke-linejoin="round"/>
<polygon points="811.6,573.2 868.2,576.5 880.7,620.7 823.2,615.2" fill="url(#g139)" stroke="url(#g139)" stroke-width="0.6" stroke-linejoin="round"/>
<polyline points="811.9,573.6 823.6,614.8" fill="none" stroke="#fafafa" stroke-width="1.5"/>
<polygon points="808.2,623.3 833.2,628.3 835.2,642.0 816.6,640.0" fill="#7d7d7d" stroke="#7d7d7d" stroke-width="0.6" stroke-linejoin="round"/>
<polygon points="823.2,615.3 828.2,616.6 874.8,615.0 881.5,625.0 878.2,632.0 876.5,648.6 849.9,645.3 835.2,642.0 833.2,628.3 829.9,621.6" fill="url(#g140)" stroke="url(#g140)" stroke-width="0.6" stroke-linejoin="round"/>
<polygon points="828.2,616.6 874.8,615.0 857.4,634.1" fill="url(#g141)" stroke="url(#g141)" stroke-width="0.6" stroke-linejoin="round"/>
<polygon points="828.2,616.6 857.4,634.1 853.2,641.6 835.2,642.0 833.2,628.3" fill="url(#g142)" stroke="url(#g142)" stroke-width="0.6" stroke-linejoin="round"/>
<polygon points="863.2,635.0 878.2,632.0 876.5,648.6 873.2,647.4" fill="#ffffff" stroke="#ffffff" stroke-width="0.6" stroke-linejoin="round"/>
<polygon points="849.9,646.6 861.9,646.9 900.1,703.6 896.5,708.5" fill="url(#g143)" stroke="url(#g143)" stroke-width="0.6" stroke-linejoin="round"/>
<polygon points="861.9,646.9 878.2,643.6 928.1,709.9 900.1,706.5" fill="url(#g144)" stroke="url(#g144)" stroke-width="0.6" stroke-linejoin="round"/>
<polygon points="878.2,630.0 885.2,630.3 946.8,715.2 941.8,716.9 928.1,708.5 878.2,643.6" fill="url(#g145)" stroke="url(#g145)" stroke-width="0.6" stroke-linejoin="round"/>
<polygon points="896.5,708.5 900.1,706.5 928.1,709.9 941.8,716.9 903.1,712.4" fill="url(#g146)" stroke="url(#g146)" stroke-width="0.6" stroke-linejoin="round"/>
<polygon points="903.1,711.9 944.8,716.5 938.1,717.4 930.6,731.5 928.4,737.5 911.5,733.5 909.8,726.9 913.1,720.2" fill="url(#g147)" stroke="url(#g147)" stroke-width="0.6" stroke-linejoin="round"/>
<polygon points="941.8,716.9 948.1,708.2 961.4,714.9 949.8,719.9" fill="url(#g148)" stroke="url(#g148)" stroke-width="0.6" stroke-linejoin="round"/>
<polygon points="854.0,544.3 894.3,519.0 887.7,563.0 869.9,578.0 849.7,575.7 849.0,564.9" fill="url(#g149)" stroke="url(#g149)" stroke-width="0.6" stroke-linejoin="round"/>
<polygon points="894.3,519.0 921.4,519.9 937.3,539.6 914.9,546.1 911.1,564.9 887.7,563.0" fill="url(#g150)" stroke="url(#g150)" stroke-width="0.6" stroke-linejoin="round"/>
<polygon points="869.9,578.0 887.7,563.0 969.1,661.2 922.3,627.5 879.3,624.7" fill="url(#g151)" stroke="url(#g151)" stroke-width="0.6" stroke-linejoin="round"/>
<polygon points="879.3,624.7 922.3,627.5 969.1,661.2 952.3,659.4" fill="url(#g152)" stroke="url(#g152)" stroke-width="0.6" stroke-linejoin="round"/>
<polygon points="887.7,563.0 911.1,564.9 922.3,578.0 937.3,587.3 945.7,599.5 952.3,609.8 954.2,626.6 963.5,643.5 969.1,652.8 969.1,661.2" fill="url(#g153)" stroke="url(#g153)" stroke-width="0.6" stroke-linejoin="round"/>
<polygon points="911.1,544.3 937.3,539.6 944.8,583.6 924.2,579.8 911.1,564.9" fill="#eeeeee" stroke="#eeeeee" stroke-width="0.6" stroke-linejoin="round"/>
<polygon points="922.3,578.0 942.0,582.6 950.8,579.8 954.5,600.4 950.8,602.7 935.4,597.6" fill="url(#g154)" stroke="url(#g154)" stroke-width="0.6" stroke-linejoin="round"/>
<polygon points="916.7,544.3 944.8,540.2 948.9,546.1 946.1,579.8 942.0,582.8 922.3,578.0 913.9,562.0" fill="url(#g155)" stroke="url(#g155)" stroke-width="0.6" stroke-linejoin="round"/>
<ellipse cx="943.5" cy="561.5" rx="4.6" ry="20.3" fill="#ffffff" stroke="#8c8c8c" stroke-width="0.7"/>
<polygon points="950.4,624.7 969.1,630.4 975.1,629.4 979.6,645.3 976.6,647.6 963.5,643.5" fill="url(#g156)" stroke="url(#g156)" stroke-width="0.6" stroke-linejoin="round"/>
<polygon points="947.6,607.0 952.7,594.8 971.0,592.5 974.2,598.5 974.2,628.5 969.1,630.7 950.4,625.1" fill="url(#g157)" stroke="url(#g157)" stroke-width="0.6" stroke-linejoin="round"/>
<ellipse cx="969.5" cy="611.6" rx="4.2" ry="17.5" fill="#ffffff" stroke="#8c8c8c" stroke-width="0.7"/>
<polygon points="581.8,639.6 595.6,642.4 582.5,677.8" fill="url(#g158)" stroke="url(#g158)" stroke-width="0.6" stroke-linejoin="round"/>
<polygon points="638.2,645.0 649.3,648.8 635.4,682.6 636.9,660.4" fill="url(#g159)" stroke="url(#g159)" stroke-width="0.6" stroke-linejoin="round"/>
<polygon points="630.9,689.2 635.4,681.6 646.3,685.2 634.7,718.3" fill="url(#g160)" stroke="url(#g160)" stroke-width="0.6" stroke-linejoin="round"/>
<polygon points="687.4,685.2 696.9,688.7 685.3,723.6" fill="url(#g161)" stroke="url(#g161)" stroke-width="0.6" stroke-linejoin="round"/>
<polygon points="880.2,523.7 934.9,482.5 929.8,518.1 921.4,519.9 894.3,519.0 880.2,527.4" fill="url(#g162)" stroke="url(#g162)" stroke-width="0.6" stroke-linejoin="round"/>
<polygon points="934.9,482.5 959.8,482.5 949.5,549.9 947.6,540.5 937.3,539.6 921.4,519.9 929.8,518.1" fill="url(#g163)" stroke="url(#g163)" stroke-width="0.6" stroke-linejoin="round"/>
<polygon points="959.8,482.5 972.9,508.7 964.4,551.8 949.5,549.9" fill="url(#g164)" stroke="url(#g164)" stroke-width="0.6" stroke-linejoin="round"/>
<polygon points="751.6,527.4 791.9,517.4 787.4,563.6 742.5,570.7" fill="#141414" stroke="#141414" stroke-width="0.6" stroke-linejoin="round"/>
<polygon points="751.6,527.4 791.9,517.4 791.2,524.8 750.2,534.4" fill="url(#g165)" stroke="url(#g165)" stroke-width="0.6" stroke-linejoin="round"/>
<polygon points="749.8,536.1 791.0,526.7 790.3,534.0 748.3,543.0" fill="url(#g166)" stroke="url(#g166)" stroke-width="0.6" stroke-linejoin="round"/>
<polygon points="748.0,544.7 790.1,535.9 789.4,543.3 746.5,551.7" fill="url(#g167)" stroke="url(#g167)" stroke-width="0.6" stroke-linejoin="round"/>
<polygon points="746.1,553.4 789.2,545.1 788.5,552.5 744.7,560.3" fill="url(#g168)" stroke="url(#g168)" stroke-width="0.6" stroke-linejoin="round"/>
<polygon points="744.3,562.1 788.3,554.3 787.6,561.7 742.9,569.0" fill="url(#g169)" stroke="url(#g169)" stroke-width="0.6" stroke-linejoin="round"/>
<polygon points="791.9,517.4 815.2,519.9 810.2,540.8 807.9,538.6" fill="url(#g170)" stroke="url(#g170)" stroke-width="0.6" stroke-linejoin="round"/>
<polygon points="791.9,517.4 808.2,538.3 799.9,579.0 787.4,563.6" fill="url(#g171)" stroke="url(#g171)" stroke-width="0.6" stroke-linejoin="round"/>
<polygon points="798.3,532.4 807.4,541.9 804.1,569.9 793.3,559.1" fill="url(#g172)" stroke="url(#g172)" stroke-width="0.6" stroke-linejoin="round"/>
<polygon points="747.8,573.2 787.4,563.6 800.4,579.9" fill="#ffffff" stroke="#ffffff" stroke-width="0.6" stroke-linejoin="round"/>
<polygon points="819.9,499.1 871.5,500.0 859.0,541.9 811.6,539.9" fill="url(#g173)" stroke="url(#g173)" stroke-width="0.6" stroke-linejoin="round"/>
<polyline points="811.6,539.9 819.9,499.1 871.5,500.0" fill="none" stroke="#ffffff" stroke-width="1.2"/>
<polygon points="871.5,500.0 880.2,518.3 868.2,540.8 859.0,541.9" fill="url(#g174)" stroke="url(#g174)" stroke-width="0.6" stroke-linejoin="round"/>
<polyline points="870.0,505.0 880.2,518.3" fill="none" stroke="#6e6e6e" stroke-width="0.7"/>
<polyline points="867.5,513.4 876.8,524.6" fill="none" stroke="#6e6e6e" stroke-width="0.7"/>
<polyline points="865.0,521.8 873.5,530.9" fill="none" stroke="#6e6e6e" stroke-width="0.7"/>
<polyline points="862.5,530.2 870.1,537.2" fill="none" stroke="#6e6e6e" stroke-width="0.7"/>
<polygon points="808.2,538.3 811.6,539.9 859.0,541.9 868.2,540.8 856.5,549.1 850.2,574.5 803.3,581.2 799.9,579.0" fill="#fcfcfc" stroke="#fcfcfc" stroke-width="0.6" stroke-linejoin="round"/>
<polygon points="818.2,549.9 852.4,550.2 846.5,571.9 814.9,571.9" fill="url(#g175)" stroke="url(#g175)" stroke-width="0.6" stroke-linejoin="round"/>
<polygon points="808.2,538.3 811.6,539.9 803.3,581.2 799.9,579.0" fill="url(#g176)" stroke="url(#g176)" stroke-width="0.6" stroke-linejoin="round"/>
<polygon points="801.7,582.5 811.9,584.5 827.5,619.0 826.0,624.0" fill="#000000" stroke="#000000" stroke-width="0.6" stroke-linejoin="round"/>
<polygon points="811.6,573.2 868.2,576.5 880.7,620.7 823.2,615.2" fill="url(#g177)" stroke="url(#g177)" stroke-width="0.6" stroke-linejoin="round"/>
<polyline points="811.9,573.6 823.6,614.8" fill="none" stroke="#fafafa" stroke-width="1.5"/>
<polygon points="808.2,623.3 833.2,628.3 835.2,642.0 816.6,640.0" fill="#7d7d7d" stroke="#7d7d7d" stroke-width="0.6" stroke-linejoin="round"/>
<polygon points="823.2,615.3 828.2,616.6 874.8,615.0 881.5,625.0 878.2,632.0 876.5,648.6 849.9,645.3 835.2,642.0 833.2,628.3 829.9,621.6" fill="url(#g178)" stroke="url(#g178)" stroke-width="0.6" stroke-linejoin="round"/>
<polygon points="828.2,616.6 874.8,615.0 857.4,634.1" fill="url(#g179)" stroke="url(#g179)" stroke-width="0.6" stroke-linejoin="round"/>
<polygon points="828.2,616.6 857.4,634.1 853.2,641.6 835.2,642.0 833.2,628.3" fill="url(#g180)" stroke="url(#g180)" stroke-width="0.6" stroke-linejoin="round"/>
<polygon points="863.2,635.0 878.2,632.0 876.5,648.6 873.2,647.4" fill="#ffffff" stroke="#ffffff" stroke-width="0.6" stroke-linejoin="round"/>
<polygon points="849.9,646.6 861.9,646.9 900.1,703.6 896.5,708.5" fill="url(#g181)" stroke="url(#g181)" stroke-width="0.6" stroke-linejoin="round"/>
<polygon points="861.9,646.9 878.2,643.6 928.1,709.9 900.1,706.5" fill="url(#g182)" stroke="url(#g182)" stroke-width="0.6" stroke-linejoin="round"/>
<polygon points="878.2,630.0 885.2,630.3 946.8,715.2 941.8,716.9 928.1,708.5 878.2,643.6" fill="url(#g183)" stroke="url(#g183)" stroke-width="0.6" stroke-linejoin="round"/>
<polygon points="896.5,708.5 900.1,706.5 928.1,709.9 941.8,716.9 903.1,712.4" fill="url(#g184)" stroke="url(#g184)" stroke-width="0.6" stroke-linejoin="round"/>
<polygon points="903.1,711.9 944.8,716.5 938.1,717.4 930.6,731.5 928.4,737.5 911.5,733.5 909.8,726.9 913.1,720.2" fill="url(#g185)" stroke="url(#g185)" stroke-width="0.6" stroke-linejoin="round"/>
<polygon points="941.8,716.9 948.1,708.2 961.4,714.9 949.8,719.9" fill="url(#g186)" stroke="url(#g186)" stroke-width="0.6" stroke-linejoin="round"/>
<polygon points="854.0,544.3 894.3,519.0 887.7,563.0 869.9,578.0 849.7,575.7 849.0,564.9" fill="url(#g187)" stroke="url(#g187)" stroke-width="0.6" stroke-linejoin="round"/>
<polygon points="894.3,519.0 921.4,519.9 937.3,539.6 914.9,546.1 911.1,564.9 887.7,563.0" fill="url(#g188)" stroke="url(#g188)" stroke-width="0.6" stroke-linejoin="round"/>
<polygon points="869.9,578.0 887.7,563.0 969.1,661.2 922.3,627.5 879.3,624.7" fill="url(#g189)" stroke="url(#g189)" stroke-width="0.6" stroke-linejoin="round"/>
<polygon points="879.3,624.7 922.3,627.5 969.1,661.2 952.3,659.4" fill="url(#g190)" stroke="url(#g190)" stroke-width="0.6" stroke-linejoin="round"/>
<polygon points="887.7,563.0 911.1,564.9 922.3,578.0 937.3,587.3 945.7,599.5 952.3,609.8 954.2,626.6 963.5,643.5 969.1,652.8 969.1,661.2" fill="url(#g191)" stroke="url(#g191)" stroke-width="0.6" stroke-linejoin="round"/>
<polygon points="925.0,579.1 949.1,575.8 955.8,598.2 950.8,603.2 936.6,598.6" fill="url(#g192)" stroke="url(#g192)" stroke-width="0.6" stroke-linejoin="round"/>
<polygon points="913.3,561.6 916.6,545.0 943.6,540.3 948.6,550.3 945.3,582.4 940.0,583.6 923.3,578.3" fill="url(#g193)" stroke="url(#g193)" stroke-width="0.6" stroke-linejoin="round"/>
<ellipse cx="943.0" cy="562.0" rx="5.0" ry="20.5" fill="#ffffff" stroke="#969696" stroke-width="0.7"/>
<polygon points="954.9,628.2 973.3,626.5 980.2,641.5 975.2,646.9 964.9,643.5" fill="url(#g194)" stroke="url(#g194)" stroke-width="0.6" stroke-linejoin="round"/>
<polygon points="948.3,613.2 949.9,600.2 969.9,594.1 974.4,600.2 974.4,626.5 966.6,630.2 951.6,626.9" fill="url(#g195)" stroke="url(#g195)" stroke-width="0.6" stroke-linejoin="round"/>
<ellipse cx="969.6" cy="613.2" rx="5.0" ry="17.0" fill="#ffffff" stroke="#969696" stroke-width="0.7"/>
<polygon points="939.1,551.0 1148.1,573.3 1148.1,577.3 939.1,574.9" fill="#ffffff" stroke="#ffffff" stroke-width="0.6" stroke-linejoin="round"/>
<polygon points="948.6,574.9 1151.9,594.1 1151.9,597.2 948.6,593.3" fill="#ffffff" stroke="#ffffff" stroke-width="0.6" stroke-linejoin="round"/>
<polygon points="965.9,599.9 1158.9,624.0 1158.9,627.2 965.9,621.6" fill="#ffffff" stroke="#ffffff" stroke-width="0.6" stroke-linejoin="round"/>
<polygon points="973.3,621.6 1161.0,641.2 1161.0,644.2 973.3,638.2" fill="#ffffff" stroke="#ffffff" stroke-width="0.6" stroke-linejoin="round"/>
</svg>
<div id="cw">
<div id="ct"><span class="t">@deV-Workstation</span></div>
<div id="cb">
<div style="top:-4.70px;left:11px">&gt;<span style="position:absolute;left:17px;letter-spacing:0.33px">Keypress c</span></div>
<div style="top:17.82px;left:11px">&gt;<span style="position:absolute;left:17px;letter-spacing:0.33px">Keypress c</span></div>
<div style="top:40.34px;left:11px">&gt;<span style="position:absolute;left:17px;letter-spacing:0.33px">Keypress c</span></div>
<div style="top:62.86px;left:11px">&gt;<span style="position:absolute;left:17px;letter-spacing:0.33px">Keypress c</span></div>
<div style="top:85.38px;left:11px">&gt;<span style="position:absolute;left:17px;letter-spacing:0.33px">Keypress c</span></div>
<div style="top:107.90px;left:11px">&gt;<span style="position:absolute;left:17px;letter-spacing:0.33px">Keypress c</span></div>
<div style="top:130.42px;left:11px">&gt;<span style="position:absolute;left:17px;letter-spacing:0.33px">Keypress c</span></div>
<div style="top:152.94px;left:11px">&gt;<span style="position:absolute;left:17px;letter-spacing:0.33px">Keypress c</span></div>
<div style="top:175.46px;left:11px">&gt;<span style="position:absolute;left:17px;letter-spacing:0.33px">Keypress c</span></div>
<div style="top:197.98px;left:11px">&gt;<span style="position:absolute;left:17px;letter-spacing:0.33px">Keypress c</span></div>
<div style="top:220.50px;left:11px">&gt;<span style="position:absolute;left:17px;letter-spacing:0.33px">Keypress c</span></div>
<div style="top:243.02px;left:11px">&gt;<span style="position:absolute;left:17px;letter-spacing:0.33px">Keypress c</span></div>
<div style="top:265.54px;left:11px">&gt;<span style="position:absolute;left:17px;letter-spacing:0.33px">Keypress c</span></div>
<div style="top:288.06px;left:11px">&gt;<span style="position:absolute;left:17px;letter-spacing:0.33px">Keypress c</span></div>
<div style="top:310.58px;left:11px">&gt;<span style="position:absolute;left:17px;letter-spacing:0.33px">Keypress c</span></div>
<div style="top:333.10px;left:11px">&gt;<span style="position:absolute;left:17px;letter-spacing:0.33px">Keypress c</span></div>
<div style="top:355.62px;left:11px">&gt;<span style="position:absolute;left:17px;letter-spacing:0.33px">Keypress c</span></div>
<div style="top:378.14px;left:11px">&gt;<span style="position:absolute;left:17px;letter-spacing:0.33px">Keypress e</span></div>
<div style="top:400.66px;left:7px">&gt;<span style="position:absolute;left:17px;letter-spacing:0.33px">Keypress d</span></div>
<div style="top:423.18px;left:7px">&gt;<span style="position:absolute;left:17px;letter-spacing:0.33px">Keypress d</span></div>
</div>
<div id="sb"><div id="th"></div></div>
</div>
<svg width="1778" height="962" viewBox="0 0 1778 962" style="pointer-events:none">
<defs>
<g id="logo">
<circle cx="11.6" cy="11.6" r="11.6" fill="#000"/>
<path d="M2,6.5H9 M2,11.6H9 M2,16.7H9 M14.5,6.5L21.3,11.6L14.5,16.7 M14.5,11.6H21.3" stroke="#ffee00" stroke-width="1.1" fill="none"/>
<path d="M11.4,1.2C7.2,6 7.2,17.2 11.4,22C15.6,17.2 15.6,6 11.4,1.2Z" fill="#6ff6f6"/>
<path d="M8.6,6.5H14.3 M8.4,11.6H14.5 M8.6,16.7H14.3" stroke="#b9f58a" stroke-width="1" fill="none"/>
</g>
</defs>
<use href="#logo" x="1.9" y="5.9"/>
<use href="#logo" x="1172.8" y="332"/>
<!-- main window controls -->
<g stroke="#8a8a8a" stroke-width="1" fill="none">
<path d="M1608,18.5H1623"/>
<rect x="1677.5" y="11.5" width="14" height="14"/>
<path d="M1748,11L1763,26M1763,11L1748,26"/>
</g>
<!-- console controls -->
<g stroke="#000" stroke-width="1.2" fill="none">
<path d="M1579,344.5H1594"/>
<rect x="1648.5" y="337.5" width="14" height="14"/>
<path d="M1719,337L1734,352M1734,337L1719,352"/>
</g>
<g stroke="#555" stroke-width="2.4" fill="none">
<path d="M1742.3,385.8L1747.5,380.6L1752.7,385.8"/>
<path d="M1742.3,800.6L1747.5,805.8L1752.7,800.6"/>
</g>
</svg>

</body></html>
